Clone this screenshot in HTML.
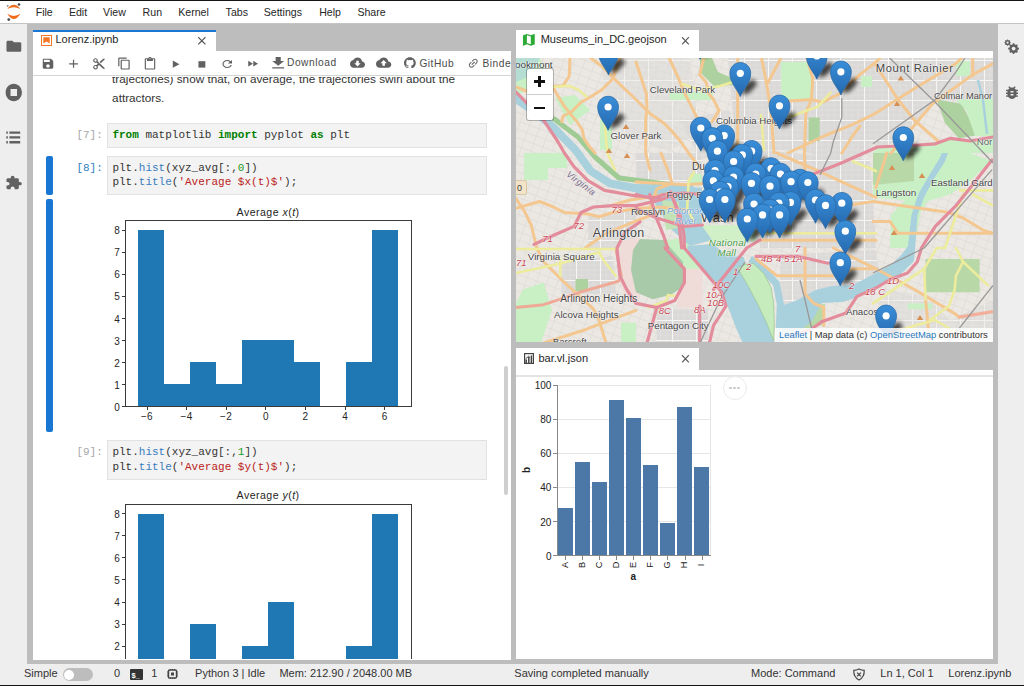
<!DOCTYPE html>
<html><head><meta charset="utf-8">
<style>
*{box-sizing:border-box;margin:0;padding:0}
html,body{width:1024px;height:686px;overflow:hidden;background:#bdbdbd;font-family:"Liberation Sans",sans-serif;color:rgba(0,0,0,0.87);position:relative}
.a{position:absolute}
.t{position:absolute;white-space:nowrap;line-height:1}
</style></head>
<body>
<div class="a" style="left:0px;top:0px;width:1024px;height:1px;background:#141414;"></div>
<div class="a" style="left:0px;top:685px;width:1024px;height:1px;background:#141414;"></div>
<div class="a" style="left:0px;top:1px;width:1024px;height:23px;background:#fff;border-bottom:1px solid #c4c4c4"></div>
<svg class="a" style="left:5px;top:2px" width="18" height="20" viewBox="0 0 18 20">
<path d="M2.3 6.9 Q8.85 -1.5 15.4 6.9 Q8.85 3.4 2.3 6.9Z" fill="#ef6c1a"/>
<path d="M2.3 11.8 Q8.85 22.2 15.4 11.8 Q8.85 16.0 2.3 11.8Z" fill="#ef6c1a"/>
<circle cx="14" cy="2.5" r="1.3" fill="#4a4a4a"/>
<circle cx="3.8" cy="17.6" r="1.4" fill="#4a4a4a"/>
<circle cx="2.7" cy="3.8" r="0.9" fill="#777"/>
</svg>
<div class="t " style="left:35.70px;top:6.93px;font-size:10.6px;color:#262626;font-family:'Liberation Sans',sans-serif;">File</div>
<div class="t " style="left:68.90px;top:6.93px;font-size:10.6px;color:#262626;font-family:'Liberation Sans',sans-serif;">Edit</div>
<div class="t " style="left:103.10px;top:6.93px;font-size:10.6px;color:#262626;font-family:'Liberation Sans',sans-serif;">View</div>
<div class="t " style="left:142.60px;top:6.93px;font-size:10.6px;color:#262626;font-family:'Liberation Sans',sans-serif;">Run</div>
<div class="t " style="left:178.20px;top:6.93px;font-size:10.6px;color:#262626;font-family:'Liberation Sans',sans-serif;">Kernel</div>
<div class="t " style="left:225.60px;top:6.93px;font-size:10.6px;color:#262626;font-family:'Liberation Sans',sans-serif;">Tabs</div>
<div class="t " style="left:263.70px;top:6.93px;font-size:10.6px;color:#262626;font-family:'Liberation Sans',sans-serif;">Settings</div>
<div class="t " style="left:319.20px;top:6.93px;font-size:10.6px;color:#262626;font-family:'Liberation Sans',sans-serif;">Help</div>
<div class="t " style="left:357.40px;top:6.93px;font-size:10.6px;color:#262626;font-family:'Liberation Sans',sans-serif;">Share</div>
<div class="a" style="left:0px;top:24px;width:27px;height:640px;background:#eeeeee;"></div>
<div class="a" style="left:998px;top:24px;width:26px;height:640px;background:#eeeeee;"></div>
<svg class="a" style="left:4.72px;top:38.25px" width="17.76" height="16.50" viewBox="0 0 24 24" preserveAspectRatio="none"><path d="M10 4H4c-1.1 0-1.99.9-1.99 2L2 18c0 1.1.9 2 2 2h16c1.1 0 2-.9 2-2V8c0-1.1-.9-2-2-2h-8l-2-2z" fill="#616161" /></svg>
<svg class="a" style="left:3.87px;top:81.56px" width="19.56" height="20.88" viewBox="0 0 24 24" preserveAspectRatio="none"><path d="M12 2C6.48 2 2 6.48 2 12s4.48 10 10 10 10-4.48 10-10S17.52 2 12 2zm4 14H8V8h8v8z" fill="#616161" /></svg>
<svg class="a" style="left:4.38px;top:122.60px" width="18.53" height="28.80" viewBox="0 0 24 24" preserveAspectRatio="none"><path d="M3 13h2v-2H3v2zm0 4h2v-2H3v2zm0-8h2V7H3v2zm4 4h14v-2H7v2zm0 4h14v-2H7v2zM7 7v2h14V7H7z" fill="#616161" /></svg>
<svg class="a" style="left:4.74px;top:175.36px" width="17.49" height="15.43" viewBox="0 0 24 24" preserveAspectRatio="none"><path d="M20.5 11H19V7c0-1.1-.9-2-2-2h-4V3.5C13 2.12 11.88 1 10.5 1S8 2.12 8 3.5V5H4c-1.1 0-1.99.9-1.99 2v3.8H3.5c1.49 0 2.7 1.21 2.7 2.7s-1.21 2.7-2.7 2.7H2V20c0 1.1.9 2 2 2h3.8v-1.5c0-1.49 1.21-2.7 2.7-2.7 1.490 0 2.7 1.21 2.7 2.7V22H17c1.1 0 2-.9 2-2v-4h1.5c1.38 0 2.5-1.12 2.5-2.5S21.88 11 20.5 11z" fill="#616161" /></svg>
<svg class="a" style="left:1004px;top:39px" width="16" height="16" viewBox="0 0 16 16">
<g fill="#616161">
<circle cx="3.6" cy="3.6" r="2.6"/>
<circle cx="9.6" cy="9.6" r="4.4"/>
</g>
<circle cx="3.6" cy="3.6" r="1.1" fill="#eee"/>
<circle cx="9.6" cy="9.6" r="1.9" fill="#eee"/>
<g stroke="#616161" stroke-width="1.6">
<path d="M9.6 4.2V15M4.2 9.6H15M5.8 5.8L13.4 13.4M13.4 5.8L5.8 13.4"/>
</g>
<circle cx="9.6" cy="9.6" r="1.9" fill="#eee"/>
<g stroke="#616161" stroke-width="1"><path d="M3.6 0.5V6.7M0.5 3.6H6.7M1.4 1.4L5.8 5.8M5.8 1.4L1.4 5.8"/></g>
<circle cx="3.6" cy="3.6" r="1.1" fill="#eee"/>
</svg>
<svg class="a" style="left:1003.00px;top:83.57px" width="18.00" height="17.07" viewBox="0 0 24 24" preserveAspectRatio="none"><path d="M20 8h-2.81c-.45-.78-1.07-1.45-1.82-1.96L17 4.41 15.59 3l-2.17 2.17C12.96 5.06 12.49 5 12 5c-.49 0-.96.06-1.41.17L8.41 3 7 4.41l1.62 1.63C7.88 6.55 7.26 7.22 6.81 8H4v2h2.09c-.05.33-.09.66-.09 1v1H4v2h2v1c0 .34.04.67.09 1H4v2h2.81c1.04 1.79 2.97 3 5.19 3s4.15-1.21 5.19-3H20v-2h-2.09c.05-.33.09-.66.09-1v-1h2v-2h-2v-1c0-.34-.04-.67-.09-1H20V8zm-6 8h-4v-2h4v2zm0-4h-4v-2h4v2z" fill="#616161" /></svg>
<div class="a" style="left:0px;top:664px;width:1024px;height:21px;background:#eeeeee;"></div>
<div class="t " style="left:24.00px;top:668.29px;font-size:11px;color:#333;font-family:'Liberation Sans',sans-serif;">Simple</div>
<div class="a" style="left:62.5px;top:668px;width:30px;height:13px;border-radius:7px;background:#bdbdbd"></div>
<div class="a" style="left:64px;top:669.5px;width:10px;height:10px;border-radius:5px;background:#fff"></div>
<div class="t " style="left:114.00px;top:668.29px;font-size:11px;color:#333;font-family:'Liberation Sans',sans-serif;">0</div>
<div class="a" style="left:129.7px;top:668.8px;width:13.3px;height:11.7px;background:#333;border-radius:1px"></div>
<div class="t " style="left:131.50px;top:671.85px;font-size:7.5px;color:#fff;font-family:'Liberation Sans',sans-serif;font-weight:bold">$_</div>
<div class="t " style="left:151.20px;top:668.29px;font-size:11px;color:#333;font-family:'Liberation Sans',sans-serif;">1</div>
<svg class="a" style="left:166px;top:669px" width="13" height="10" viewBox="0 0 13 10">
<rect x="2.5" y="1" width="8" height="8" rx="1" fill="none" stroke="#444" stroke-width="1.4"/>
<rect x="5" y="3.5" width="3" height="3" fill="#444"/>
<path d="M1 3h1.5M1 5h1.5M1 7h1.5M10.5 3H12M10.5 5H12M10.5 7H12M4.5 0V1M6.5 0V1M8.5 0V1M4.5 9V10M6.5 9V10M8.5 9V10" stroke="#444" stroke-width="0.9"/>
</svg>
<div class="t " style="left:195.10px;top:668.29px;font-size:11px;color:#333;font-family:'Liberation Sans',sans-serif;">Python 3 | Idle</div>
<div class="t " style="left:279.40px;top:668.29px;font-size:11px;color:#333;font-family:'Liberation Sans',sans-serif;">Mem: 212.90 / 2048.00 MB</div>
<div class="t " style="left:514.30px;top:668.29px;font-size:11px;color:#333;font-family:'Liberation Sans',sans-serif;">Saving completed manually</div>
<div class="t " style="left:751.00px;top:668.29px;font-size:11px;color:#333;font-family:'Liberation Sans',sans-serif;">Mode: Command</div>
<svg class="a" style="left:852px;top:668px" width="14" height="13" viewBox="0 0 14 13">
<path d="M7 1.0 Q9.5 2.2 12.2 2.4 Q12.6 9.2 7 12.0 Q1.4 9.2 1.8 2.4 Q4.5 2.2 7 1.0Z" fill="none" stroke="#444" stroke-width="1.2"/>
<path d="M5.1 4.6L8.9 8.4M8.9 4.6L5.1 8.4" stroke="#444" stroke-width="1.2"/>
</svg>
<div class="t " style="left:880.30px;top:668.29px;font-size:11px;color:#333;font-family:'Liberation Sans',sans-serif;">Ln 1, Col 1</div>
<div class="t " style="left:948.30px;top:668.29px;font-size:11px;color:#333;font-family:'Liberation Sans',sans-serif;">Lorenz.ipynb</div>
<div class="a" style="left:33px;top:51px;width:478px;height:609px;background:#fff;"></div>
<div class="a" style="left:33px;top:30px;width:183px;height:21px;background:#fff;border-top:2px solid #1976d2"></div>
<svg class="a" style="left:41px;top:35px" width="11" height="11" viewBox="0 0 11 11">
<rect x="0.5" y="0.5" width="10" height="10" fill="none" stroke="#f37726" stroke-width="1"/>
<path d="M2.3 2.2H8.7V8.6L5.5 6.6L2.3 8.6Z" fill="#f37726"/>
</svg>
<div class="t " style="left:55.50px;top:34.49px;font-size:11px;color:#262626;font-family:'Liberation Sans',sans-serif;">Lorenz.ipynb</div>
<svg class="a" style="left:195.14px;top:34.14px" width="13.71" height="13.71" viewBox="0 0 24 24" preserveAspectRatio="none"><path d="M19 6.41L17.59 5 12 10.59 6.41 5 5 6.41 10.59 12 5 17.59 6.41 19 12 13.41 17.59 19 19 17.59 13.41 12z" fill="#555" /></svg>
<div class="a" style="left:33px;top:75px;width:478px;height:1px;background:#d4d4d4;"></div>
<svg class="a" style="left:40.85px;top:57.13px" width="14.00" height="13.33" viewBox="0 0 24 24" preserveAspectRatio="none"><path d="M17 3H5c-1.11 0-2 .9-2 2v14c0 1.1.89 2 2 2h14c1.1 0 2-.9 2-2V7l-4-4zm-5 16c-1.66 0-3-1.34-3-3s1.34-3 3-3 3 1.34 3 3-1.34 3-3 3zm3-10H5V5h10v4z" fill="#616161" /></svg>
<svg class="a" style="left:65.86px;top:56.94px" width="15.09" height="13.71" viewBox="0 0 24 24" preserveAspectRatio="none"><path d="M19 13h-6v6h-2v-6H5v-2h6V5h2v6h6v2z" fill="#616161" /></svg>
<svg class="a" style="left:91.93px;top:57.17px" width="14.04" height="13.56" viewBox="0 0 24 24" preserveAspectRatio="none"><path d="M9.64 7.64c.23-.5.36-1.05.36-1.64 0-2.210-1.79-4-4-4S2 3.79 2 6s1.79 4 4 4c.59 0 1.14-.13 1.64-.36L10 12l-2.36 2.36C7.14 14.13 6.59 14 6 14c-2.21 0-4 1.79-4 4s1.79 4 4 4 4-1.79 4-4c0-.59-.13-1.14-.36-1.64L12 14l7 7h3v-1L9.64 7.64zM6 8c-1.1 0-2-.89-2-2s.9-2 2-2 2 .89 2 2-.9 2-2 2zm0 12c-1.1 0-2-.89-2-2s.9-2 2-2 2 .89 2 2-.9 2-2 2zm6-7.5c-.28 0-.5-.22-.5-.5s.22-.5.5-.5.5.22.5.5-.22.5-.5.5zM19 3l-6 6 2 2 7-7V3z" fill="#616161" /></svg>
<svg class="a" style="left:117.29px;top:57.45px" width="14.53" height="13.09" viewBox="0 0 24 24" preserveAspectRatio="none"><path d="M16 1H4c-1.1 0-2 .9-2 2v14h2V3h12V1zm3 4H8c-1.1 0-2 .9-2 2v14c0 1.1.9 2 2 2h11c1.1 0 2-.9 2-2V7c0-1.1-.9-2-2-2zm0 16H8V7h11v14z" fill="#616161" /></svg>
<svg class="a" style="left:143.15px;top:57.20px" width="14.00" height="13.75" viewBox="0 0 24 24" preserveAspectRatio="none"><path d="M19 2h-4.18C14.4.84 13.3 0 12 0c-1.3 0-2.4.84-2.82 2H5c-1.1 0-2 .9-2 2v16c0 1.1.9 2 2 2h14c1.1 0 2-.9 2-2V4c0-1.1-.9-2-2-2zm-7 0c.55 0 1 .45 1 1s-.45 1-1 1-1-.45-1-1 .45-1 1-1zm7 18H5V4h2v3h10V4h2v16z" fill="#616161" /></svg>
<svg class="a" style="left:168.40px;top:57.93px" width="14.40" height="12.34" viewBox="0 0 24 24" preserveAspectRatio="none"><path d="M8 5v14l11-7z" fill="#616161" /></svg>
<svg class="a" style="left:194.75px;top:57.70px" width="13.80" height="12.80" viewBox="0 0 24 24" preserveAspectRatio="none"><path d="M6 6h12v12H6z" fill="#616161" /></svg>
<svg class="a" style="left:219.80px;top:58.00px" width="14.40" height="12.00" viewBox="0 0 24 24" preserveAspectRatio="none"><path d="M17.65 6.35C16.2 4.9 14.21 4 12 4c-4.42 0-7.99 3.580-7.99 8s3.57 8 7.99 8c3.73 0 6.84-2.55 7.730-6h-2.08c-.82 2.33-3.04 4-5.65 4-3.31 0-6-2.69-6-6s2.69-6 6-6c1.66 0 3.14.69 4.22 1.78L13 11h7V4l-2.35 2.35z" fill="#616161" /></svg>
<svg class="a" style="left:245.66px;top:58.45px" width="13.44" height="11.40" viewBox="0 0 24 24" preserveAspectRatio="none"><path d="M4 18l8.5-6L4 6v12zm9-12v12l8.5-6L13 6z" fill="#616161" /></svg>
<svg class="a" style="left:267.85px;top:54.97px" width="20.40" height="16.24" viewBox="0 0 24 24" preserveAspectRatio="none"><path d="M19 9h-4V3H9v6H5l7 7 7-7zM5 18v2h14v-2H5z" fill="#616161" /></svg>
<div class="t " style="left:287.00px;top:58.37px;font-size:10.2px;color:#4a4a4a;font-family:'Liberation Sans',sans-serif;letter-spacing:0.55px">Download</div>
<svg class="a" style="left:349.80px;top:55.15px" width="15.00" height="15.30" viewBox="0 0 24 24" preserveAspectRatio="none"><path d="M19.35 10.04C18.67 6.59 15.64 4 12 4 9.11 4 6.6 5.64 5.35 8.04 2.34 8.36 0 10.91 0 14c0 3.31 2.69 6 6 6h13c2.76 0 5-2.24 5-5 0-2.64-2.05-4.78-4.65-4.96zM17 13l-5 5-5-5h3V9h4v4h3z" fill="#616161" /></svg>
<svg class="a" style="left:376.40px;top:55.15px" width="15.30" height="15.30" viewBox="0 0 24 24" preserveAspectRatio="none"><path d="M19.35 10.04C18.67 6.59 15.64 4 12 4 9.11 4 6.6 5.64 5.35 8.04 2.34 8.360 0 10.91 0 14c0 3.31 2.69 6 6 6h13c2.76 0 5-2.24 5-5 0-2.64-2.05-4.78-4.65-4.96zM14 13v4h-4v-4H7l5-5 5 5h-3z" fill="#616161" /></svg>
<svg class="a" style="left:404.40px;top:56.65px" width="11.80" height="11.79" viewBox="0 0 24 24" preserveAspectRatio="none"><path d="M12 .5C5.37.5 0 5.78 0 12.29c0 5.21 3.44 9.63 8.21 11.19.6.11.82-.26.82-.57v-2c-3.34.72-4.04-1.59-4.04-1.59-.55-1.37-1.33-1.74-1.33-1.74-1.09-.73.08-.72.08-.72 1.2.08 1.84 1.22 1.84 1.22 1.07 1.800 2.81 1.28 3.49.98.11-.76.42-1.28.76-1.57-2.67-.3-5.47-1.310-5.47-5.83 0-1.29.47-2.34 1.24-3.160-.12-.3-.54-1.5.12-3.12 0 0 1.01-.32 3.3 1.21a11.5 11.5 0 0 1 6 0c2.29-1.53 3.3-1.21 3.3-1.21.66 1.62.24 2.82.12 3.12.77.82 1.24 1.87 1.24 3.16 0 4.53-2.81 5.53-5.48 5.820.43.37.82 1.1.82 2.22v3.29c0 .32.22.69.83.57C20.57 21.91 24 17.5 24 12.29 24 5.78 18.63.5 12 .5z" fill="#616161" /></svg>
<div class="a" style="left:419px;top:52px;width:92px;height:20px;overflow:hidden">
<div class="t " style="left:0.40px;top:6.57px;font-size:10.2px;color:#4a4a4a;font-family:'Liberation Sans',sans-serif;letter-spacing:0.5px">GitHub</div>
<svg class="a" style="left:48px;top:5px" width="12.5" height="12.5" viewBox="0 0 24 24"><g transform="rotate(-45 12 12)"><path d="M3.9 12c0-1.71 1.39-3.1 3.1-3.1h4V7H7c-2.76 0-5 2.24-5 5s2.24 5 5 5h4v-1.9H7c-1.71 0-3.1-1.39-3.1-3.1zM8 13h8v-2H8v2zm9-6h-4v1.9h4c1.71 0 3.1 1.39 3.1 3.1s-1.39 3.1-3.1 3.1h-4V17h4c2.76 0 5-2.24 5-5s-2.24-5-5-5z" fill="#616161"/></g></svg>
<div class="t " style="left:63.50px;top:6.57px;font-size:10.2px;color:#4a4a4a;font-family:'Liberation Sans',sans-serif;letter-spacing:0.5px">Binder</div>
</div>
<div class="a" style="left:516px;top:51px;width:477px;height:7px;background:#fff;"></div>
<div class="a" style="left:516px;top:30px;width:183px;height:21px;background:#fff;"></div>
<svg class="a" style="left:521.23px;top:32.05px" width="15.73" height="15.60" viewBox="0 0 24 24" preserveAspectRatio="none"><path d="M20.5 3l-.16.03L15 5.1 9 3 3.36 4.9c-.21.07-.36.25-.36.48V20.5c0 .28.22.5.5.5l.16-.03L9 18.9l6 2.1 5.64-1.9c.21-.07.36-.25.36-.48V3.5c0-.28-.22-.5-.5-.5zM15 19l-6-2.11V5l6 2.11V19z" fill="#2da936" /></svg>
<div class="t " style="left:540.70px;top:34.29px;font-size:11px;color:#262626;font-family:'Liberation Sans',sans-serif;">Museums_in_DC.geojson</div>
<svg class="a" style="left:678.72px;top:34.14px" width="12.86" height="13.71" viewBox="0 0 24 24" preserveAspectRatio="none"><path d="M19 6.41L17.59 5 12 10.59 6.41 5 5 6.41 10.59 12 5 17.59 6.41 19 12 13.41 17.59 19 19 17.59 13.41 12z" fill="#555" /></svg>
<div class="a" style="left:516px;top:370px;width:477px;height:289px;background:#fff;"></div>
<div class="a" style="left:516px;top:348px;width:183px;height:22px;background:#fff;"></div>
<div class="a" style="left:516px;top:375px;width:477px;height:2px;background:#e4e4e4;"></div>
<svg class="a" style="left:524px;top:353px" width="10" height="11" viewBox="0 0 10 11">
<rect x="0.6" y="0.6" width="8.8" height="9.8" fill="none" stroke="#444" stroke-width="1.2"/>
<path d="M2.2 10V6.5M4.8 10V4M7.4 10V2.5" stroke="#444" stroke-width="1.5"/>
<path d="M1.5 6L4.5 3.2L6 4.5" stroke="#444" stroke-width="1" fill="none"/>
</svg>
<div class="t " style="left:538.50px;top:353.19px;font-size:11px;color:#262626;font-family:'Liberation Sans',sans-serif;">bar.vl.json</div>
<svg class="a" style="left:678.72px;top:352.14px" width="12.86" height="13.71" viewBox="0 0 24 24" preserveAspectRatio="none"><path d="M19 6.41L17.59 5 12 10.59 6.41 5 5 6.41 10.59 12 5 17.59 6.41 19 12 13.41 17.59 19 19 17.59 13.41 12z" fill="#555" /></svg>
<div class="a" style="left:33px;top:76.6px;width:478px;height:582.9px;overflow:hidden">
<div class="t " style="left:79.10px;top:-3.95px;font-size:11.75px;color:#333;font-family:'Liberation Sans',sans-serif;">trajectories) show that, on average, the trajectories swirl about the</div>
<div class="t " style="left:79.10px;top:15.75px;font-size:11.75px;color:#333;font-family:'Liberation Sans',sans-serif;">attractors.</div>
<div class="a" style="left:74.30px;top:46.50px;width:380.00px;height:24.60px;background:#f3f3f3;border:1px solid #e2e2e2"></div>
<div class="t " style="left:43.40px;top:53.37px;font-size:11px;color:#a8a8a8;font-family:'Liberation Mono',monospace;">[7]:</div>
<div class="t " style="left:79.40px;top:53.17px;font-size:11px;color:#333;font-family:'Liberation Mono',monospace;"><span style="color:#008000;font-weight:bold">from</span> matplotlib <span style="color:#008000;font-weight:bold">import</span> pyplot <span style="color:#008000;font-weight:bold">as</span> plt</div>
<div class="a" style="left:13.00px;top:79.40px;width:7.00px;height:39.00px;background:#1976d2;border-radius:2px"></div>
<div class="a" style="left:74.30px;top:79.60px;width:380.00px;height:38.80px;background:#f3f3f3;border:1px solid #e2e2e2"></div>
<div class="t " style="left:43.40px;top:86.57px;font-size:11px;color:#307fc1;font-family:'Liberation Mono',monospace;">[8]:</div>
<div class="t " style="left:79.40px;top:86.47px;font-size:11px;color:#333;font-family:'Liberation Mono',monospace;">plt.<span style="color:#3a7dc0">hist</span>(xyz_avg[:,<span style="color:#1a9a1a">0</span>])</div>
<div class="t " style="left:79.40px;top:100.77px;font-size:11px;color:#333;font-family:'Liberation Mono',monospace;">plt.<span style="color:#3a7dc0">title</span>(<span style="color:#ba2121">'Average $x(t)$'</span>);</div>
<div class="a" style="left:13.00px;top:122.40px;width:7.00px;height:232.70px;background:#1976d2;border-radius:2px"></div>
<div class="a" style="left:74.30px;top:363.70px;width:380.00px;height:39.80px;background:#f3f3f3;border:1px solid #e2e2e2"></div>
<div class="t " style="left:43.40px;top:370.77px;font-size:11px;color:#a8a8a8;font-family:'Liberation Mono',monospace;">[9]:</div>
<div class="t " style="left:79.40px;top:370.67px;font-size:11px;color:#333;font-family:'Liberation Mono',monospace;">plt.<span style="color:#3a7dc0">hist</span>(xyz_avg[:,<span style="color:#1a9a1a">1</span>])</div>
<div class="t " style="left:79.40px;top:384.97px;font-size:11px;color:#333;font-family:'Liberation Mono',monospace;">plt.<span style="color:#3a7dc0">title</span>(<span style="color:#ba2121">'Average $y(t)$'</span>);</div>
<div class="a" style="left:105.20px;top:153.40px;width:26.23px;height:176.40px;background:#1f77b4;"></div>
<div class="a" style="left:131.13px;top:307.75px;width:26.23px;height:22.05px;background:#1f77b4;"></div>
<div class="a" style="left:157.06px;top:285.70px;width:26.23px;height:44.10px;background:#1f77b4;"></div>
<div class="a" style="left:182.99px;top:307.75px;width:26.23px;height:22.05px;background:#1f77b4;"></div>
<div class="a" style="left:208.92px;top:263.65px;width:26.23px;height:66.15px;background:#1f77b4;"></div>
<div class="a" style="left:234.85px;top:263.65px;width:26.23px;height:66.15px;background:#1f77b4;"></div>
<div class="a" style="left:260.78px;top:285.70px;width:26.23px;height:44.10px;background:#1f77b4;"></div>
<div class="a" style="left:312.64px;top:285.70px;width:26.23px;height:44.10px;background:#1f77b4;"></div>
<div class="a" style="left:338.57px;top:153.40px;width:26.23px;height:176.40px;background:#1f77b4;"></div>
<div class="a" style="left:92.20px;top:143.40px;width:1.00px;height:186.90px;background:#3a3a3a;"></div>
<div class="a" style="left:377.70px;top:143.40px;width:1.00px;height:186.90px;background:#3a3a3a;"></div>
<div class="a" style="left:92.20px;top:143.40px;width:286.50px;height:1.00px;background:#3a3a3a;"></div>
<div class="a" style="left:92.20px;top:329.30px;width:286.50px;height:1.00px;background:#3a3a3a;"></div>
<div class="a" style="left:89.30px;top:329.35px;width:3.40px;height:0.90px;background:#3a3a3a;"></div>
<div class="t " style="left:81.20px;top:326.14px;font-size:10px;color:#262626;font-family:'Liberation Sans',sans-serif;">0</div>
<div class="a" style="left:89.30px;top:307.30px;width:3.40px;height:0.90px;background:#3a3a3a;"></div>
<div class="t " style="left:81.20px;top:304.08px;font-size:10px;color:#262626;font-family:'Liberation Sans',sans-serif;">1</div>
<div class="a" style="left:89.30px;top:285.25px;width:3.40px;height:0.90px;background:#3a3a3a;"></div>
<div class="t " style="left:81.20px;top:282.04px;font-size:10px;color:#262626;font-family:'Liberation Sans',sans-serif;">2</div>
<div class="a" style="left:89.30px;top:263.20px;width:3.40px;height:0.90px;background:#3a3a3a;"></div>
<div class="t " style="left:81.20px;top:259.99px;font-size:10px;color:#262626;font-family:'Liberation Sans',sans-serif;">3</div>
<div class="a" style="left:89.30px;top:241.15px;width:3.40px;height:0.90px;background:#3a3a3a;"></div>
<div class="t " style="left:81.20px;top:237.94px;font-size:10px;color:#262626;font-family:'Liberation Sans',sans-serif;">4</div>
<div class="a" style="left:89.30px;top:219.10px;width:3.40px;height:0.90px;background:#3a3a3a;"></div>
<div class="t " style="left:81.20px;top:215.88px;font-size:10px;color:#262626;font-family:'Liberation Sans',sans-serif;">5</div>
<div class="a" style="left:89.30px;top:197.05px;width:3.40px;height:0.90px;background:#3a3a3a;"></div>
<div class="t " style="left:81.20px;top:193.83px;font-size:10px;color:#262626;font-family:'Liberation Sans',sans-serif;">6</div>
<div class="a" style="left:89.30px;top:175.00px;width:3.40px;height:0.90px;background:#3a3a3a;"></div>
<div class="t " style="left:81.20px;top:171.78px;font-size:10px;color:#262626;font-family:'Liberation Sans',sans-serif;">7</div>
<div class="a" style="left:89.30px;top:152.95px;width:3.40px;height:0.90px;background:#3a3a3a;"></div>
<div class="t " style="left:81.20px;top:149.73px;font-size:10px;color:#262626;font-family:'Liberation Sans',sans-serif;">8</div>
<div class="a" style="left:113.55px;top:329.80px;width:0.90px;height:3.40px;background:#3a3a3a;"></div>
<div class="t " style="left:107.90px;top:335.83px;font-size:10px;color:#262626;font-family:'Liberation Sans',sans-serif;letter-spacing:0.3px">&minus;6</div>
<div class="a" style="left:153.15px;top:329.80px;width:0.90px;height:3.40px;background:#3a3a3a;"></div>
<div class="t " style="left:147.50px;top:335.83px;font-size:10px;color:#262626;font-family:'Liberation Sans',sans-serif;letter-spacing:0.3px">&minus;4</div>
<div class="a" style="left:192.75px;top:329.80px;width:0.90px;height:3.40px;background:#3a3a3a;"></div>
<div class="t " style="left:187.10px;top:335.83px;font-size:10px;color:#262626;font-family:'Liberation Sans',sans-serif;letter-spacing:0.3px">&minus;2</div>
<div class="a" style="left:232.35px;top:329.80px;width:0.90px;height:3.40px;background:#3a3a3a;"></div>
<div class="t " style="left:230.00px;top:335.83px;font-size:10px;color:#262626;font-family:'Liberation Sans',sans-serif;">0</div>
<div class="a" style="left:271.95px;top:329.80px;width:0.90px;height:3.40px;background:#3a3a3a;"></div>
<div class="t " style="left:269.60px;top:335.83px;font-size:10px;color:#262626;font-family:'Liberation Sans',sans-serif;">2</div>
<div class="a" style="left:311.55px;top:329.80px;width:0.90px;height:3.40px;background:#3a3a3a;"></div>
<div class="t " style="left:309.20px;top:335.83px;font-size:10px;color:#262626;font-family:'Liberation Sans',sans-serif;">4</div>
<div class="a" style="left:351.15px;top:329.80px;width:0.90px;height:3.40px;background:#3a3a3a;"></div>
<div class="t " style="left:348.80px;top:335.83px;font-size:10px;color:#262626;font-family:'Liberation Sans',sans-serif;">6</div>
<div class="t " style="left:203.60px;top:130.03px;font-size:10.6px;color:#262626;font-family:'Liberation Sans',sans-serif;letter-spacing:0.45px">Average <i>x</i>(<i>t</i>)</div>
<div class="a" style="left:105.20px;top:437.20px;width:26.23px;height:176.40px;background:#1f77b4;"></div>
<div class="a" style="left:131.13px;top:591.55px;width:26.23px;height:22.05px;background:#1f77b4;"></div>
<div class="a" style="left:157.06px;top:547.45px;width:26.23px;height:66.15px;background:#1f77b4;"></div>
<div class="a" style="left:182.99px;top:591.55px;width:26.23px;height:22.05px;background:#1f77b4;"></div>
<div class="a" style="left:208.92px;top:569.50px;width:26.23px;height:44.10px;background:#1f77b4;"></div>
<div class="a" style="left:234.85px;top:525.40px;width:26.23px;height:88.20px;background:#1f77b4;"></div>
<div class="a" style="left:260.78px;top:591.55px;width:26.23px;height:22.05px;background:#1f77b4;"></div>
<div class="a" style="left:286.71px;top:591.55px;width:26.23px;height:22.05px;background:#1f77b4;"></div>
<div class="a" style="left:312.64px;top:569.50px;width:26.23px;height:44.10px;background:#1f77b4;"></div>
<div class="a" style="left:338.57px;top:437.20px;width:26.23px;height:176.40px;background:#1f77b4;"></div>
<div class="a" style="left:92.20px;top:427.10px;width:1.00px;height:187.00px;background:#3a3a3a;"></div>
<div class="a" style="left:377.70px;top:427.10px;width:1.00px;height:187.00px;background:#3a3a3a;"></div>
<div class="a" style="left:92.20px;top:427.10px;width:286.50px;height:1.00px;background:#3a3a3a;"></div>
<div class="a" style="left:92.20px;top:613.10px;width:286.50px;height:1.00px;background:#3a3a3a;"></div>
<div class="a" style="left:89.30px;top:569.05px;width:3.40px;height:0.90px;background:#3a3a3a;"></div>
<div class="t " style="left:81.20px;top:565.83px;font-size:10px;color:#262626;font-family:'Liberation Sans',sans-serif;">2</div>
<div class="a" style="left:89.30px;top:547.00px;width:3.40px;height:0.90px;background:#3a3a3a;"></div>
<div class="t " style="left:81.20px;top:543.78px;font-size:10px;color:#262626;font-family:'Liberation Sans',sans-serif;">3</div>
<div class="a" style="left:89.30px;top:524.95px;width:3.40px;height:0.90px;background:#3a3a3a;"></div>
<div class="t " style="left:81.20px;top:521.73px;font-size:10px;color:#262626;font-family:'Liberation Sans',sans-serif;">4</div>
<div class="a" style="left:89.30px;top:502.90px;width:3.40px;height:0.90px;background:#3a3a3a;"></div>
<div class="t " style="left:81.20px;top:499.69px;font-size:10px;color:#262626;font-family:'Liberation Sans',sans-serif;">5</div>
<div class="a" style="left:89.30px;top:480.85px;width:3.40px;height:0.90px;background:#3a3a3a;"></div>
<div class="t " style="left:81.20px;top:477.64px;font-size:10px;color:#262626;font-family:'Liberation Sans',sans-serif;">6</div>
<div class="a" style="left:89.30px;top:458.80px;width:3.40px;height:0.90px;background:#3a3a3a;"></div>
<div class="t " style="left:81.20px;top:455.58px;font-size:10px;color:#262626;font-family:'Liberation Sans',sans-serif;">7</div>
<div class="a" style="left:89.30px;top:436.75px;width:3.40px;height:0.90px;background:#3a3a3a;"></div>
<div class="t " style="left:81.20px;top:433.54px;font-size:10px;color:#262626;font-family:'Liberation Sans',sans-serif;">8</div>
<div class="t " style="left:203.60px;top:413.73px;font-size:10.6px;color:#262626;font-family:'Liberation Sans',sans-serif;letter-spacing:0.45px">Average <i>y</i>(<i>t</i>)</div>
<div class="a" style="left:470.50px;top:289.40px;width:4.50px;height:129.00px;background:#cfcfcf;border-radius:2px"></div>
</div>
<div class="a" style="left:557.1px;top:555.1px;width:153.5px;height:1px;background:#e6e6e6;"></div>
<div class="a" style="left:552.6px;top:555.1px;width:4.5px;height:1px;background:#888;"></div>
<div class="t " style="left:545.90px;top:551.63px;font-size:10px;color:#222;font-family:'Liberation Sans',sans-serif;">0</div>
<div class="a" style="left:557.1px;top:521.0px;width:153.5px;height:1px;background:#e6e6e6;"></div>
<div class="a" style="left:552.6px;top:521.0px;width:4.5px;height:1px;background:#888;"></div>
<div class="t " style="left:540.30px;top:517.53px;font-size:10px;color:#222;font-family:'Liberation Sans',sans-serif;">20</div>
<div class="a" style="left:557.1px;top:486.9px;width:153.5px;height:1px;background:#e6e6e6;"></div>
<div class="a" style="left:552.6px;top:486.9px;width:4.5px;height:1px;background:#888;"></div>
<div class="t " style="left:540.30px;top:483.44px;font-size:10px;color:#222;font-family:'Liberation Sans',sans-serif;">40</div>
<div class="a" style="left:557.1px;top:452.8px;width:153.5px;height:1px;background:#e6e6e6;"></div>
<div class="a" style="left:552.6px;top:452.8px;width:4.5px;height:1px;background:#888;"></div>
<div class="t " style="left:540.30px;top:449.34px;font-size:10px;color:#222;font-family:'Liberation Sans',sans-serif;">60</div>
<div class="a" style="left:557.1px;top:418.7px;width:153.5px;height:1px;background:#e6e6e6;"></div>
<div class="a" style="left:552.6px;top:418.7px;width:4.5px;height:1px;background:#888;"></div>
<div class="t " style="left:540.30px;top:415.24px;font-size:10px;color:#222;font-family:'Liberation Sans',sans-serif;">80</div>
<div class="a" style="left:557.1px;top:384.6px;width:153.5px;height:1px;background:#e6e6e6;"></div>
<div class="a" style="left:552.6px;top:384.6px;width:4.5px;height:1px;background:#888;"></div>
<div class="t " style="left:534.70px;top:381.14px;font-size:10px;color:#222;font-family:'Liberation Sans',sans-serif;">100</div>
<div class="a" style="left:710.1px;top:385.1px;width:1px;height:170.5px;background:#e6e6e6;"></div>
<div class="a" style="left:557.95px;top:507.86px;width:15.05px;height:47.74px;background:#4c78a8;"></div>
<div class="a" style="left:575.01px;top:461.83px;width:15.05px;height:93.78px;background:#4c78a8;"></div>
<div class="a" style="left:592.06px;top:482.29px;width:15.05px;height:73.31px;background:#4c78a8;"></div>
<div class="a" style="left:609.12px;top:400.45px;width:15.05px;height:155.16px;background:#4c78a8;"></div>
<div class="a" style="left:626.17px;top:417.5px;width:15.05px;height:138.11px;background:#4c78a8;"></div>
<div class="a" style="left:643.23px;top:465.24px;width:15.05px;height:90.37px;background:#4c78a8;"></div>
<div class="a" style="left:660.28px;top:523.21px;width:15.05px;height:32.4px;background:#4c78a8;"></div>
<div class="a" style="left:677.34px;top:407.26px;width:15.05px;height:148.34px;background:#4c78a8;"></div>
<div class="a" style="left:694.39px;top:466.94px;width:15.05px;height:88.66px;background:#4c78a8;"></div>
<div class="a" style="left:556.6px;top:385.1px;width:1px;height:171.0px;background:#888;"></div>
<div class="a" style="left:556.6px;top:555.1px;width:154.0px;height:1px;background:#888;"></div>
<div class="a" style="left:565.13px;top:555.6px;width:1px;height:4.5px;background:#888;"></div>
<div class="t" style="left:558.63px;top:559.20px;width:12px;height:12px;font-size:9.2px;color:#222;transform-origin:6px 6px;transform:rotate(-90deg);text-align:center;line-height:12px">A</div>
<div class="a" style="left:582.18px;top:555.6px;width:1px;height:4.5px;background:#888;"></div>
<div class="t" style="left:575.68px;top:559.20px;width:12px;height:12px;font-size:9.2px;color:#222;transform-origin:6px 6px;transform:rotate(-90deg);text-align:center;line-height:12px">B</div>
<div class="a" style="left:599.24px;top:555.6px;width:1px;height:4.5px;background:#888;"></div>
<div class="t" style="left:592.74px;top:559.20px;width:12px;height:12px;font-size:9.2px;color:#222;transform-origin:6px 6px;transform:rotate(-90deg);text-align:center;line-height:12px">C</div>
<div class="a" style="left:616.29px;top:555.6px;width:1px;height:4.5px;background:#888;"></div>
<div class="t" style="left:609.79px;top:559.20px;width:12px;height:12px;font-size:9.2px;color:#222;transform-origin:6px 6px;transform:rotate(-90deg);text-align:center;line-height:12px">D</div>
<div class="a" style="left:633.35px;top:555.6px;width:1px;height:4.5px;background:#888;"></div>
<div class="t" style="left:626.85px;top:559.20px;width:12px;height:12px;font-size:9.2px;color:#222;transform-origin:6px 6px;transform:rotate(-90deg);text-align:center;line-height:12px">E</div>
<div class="a" style="left:650.41px;top:555.6px;width:1px;height:4.5px;background:#888;"></div>
<div class="t" style="left:643.91px;top:559.20px;width:12px;height:12px;font-size:9.2px;color:#222;transform-origin:6px 6px;transform:rotate(-90deg);text-align:center;line-height:12px">F</div>
<div class="a" style="left:667.46px;top:555.6px;width:1px;height:4.5px;background:#888;"></div>
<div class="t" style="left:660.96px;top:559.20px;width:12px;height:12px;font-size:9.2px;color:#222;transform-origin:6px 6px;transform:rotate(-90deg);text-align:center;line-height:12px">G</div>
<div class="a" style="left:684.52px;top:555.6px;width:1px;height:4.5px;background:#888;"></div>
<div class="t" style="left:678.02px;top:559.20px;width:12px;height:12px;font-size:9.2px;color:#222;transform-origin:6px 6px;transform:rotate(-90deg);text-align:center;line-height:12px">H</div>
<div class="a" style="left:701.57px;top:555.6px;width:1px;height:4.5px;background:#888;"></div>
<div class="t" style="left:695.07px;top:559.20px;width:12px;height:12px;font-size:9.2px;color:#222;transform-origin:6px 6px;transform:rotate(-90deg);text-align:center;line-height:12px">I</div>
<div class="t " style="left:630.50px;top:572.03px;font-size:10px;color:#222;font-family:'Liberation Sans',sans-serif;font-weight:bold">a</div>
<div class="t" style="left:521px;top:464px;width:12px;height:12px;font-size:10px;color:#222;font-weight:bold;transform-origin:6px 6px;transform:rotate(-90deg);text-align:center;line-height:12px">b</div>
<div class="a" style="left:722.5px;top:376px;width:24px;height:24px;border-radius:12px;border:1px solid #eaeaea;background:#fff"></div>
<div class="a" style="left:729.30px;top:386.80px;width:2.4px;height:2.4px;border-radius:1.2px;background:#c8c8c8"></div>
<div class="a" style="left:733.30px;top:386.80px;width:2.4px;height:2.4px;border-radius:1.2px;background:#c8c8c8"></div>
<div class="a" style="left:737.30px;top:386.80px;width:2.4px;height:2.4px;border-radius:1.2px;background:#c8c8c8"></div>
<div class="a" style="left:516px;top:58px;width:477px;height:284px;overflow:hidden"><div class="a" style="left:-516px;top:-58px;width:1024px;height:686px">
<svg class="a" style="left:516px;top:58px" width="477" height="284" viewBox="516 58 477 284">
<defs>
<linearGradient id="pg" x1="0" y1="0" x2="0" y2="1"><stop offset="0" stop-color="#3a8fd9"/><stop offset="1" stop-color="#2468ae"/></linearGradient>
<filter id="bl" x="-50%" y="-50%" width="200%" height="200%"><feGaussianBlur stdDeviation="2.0"/></filter>
<pattern id="gr" width="24" height="20" patternUnits="userSpaceOnUse"><rect width="24" height="20" fill="#dad9d7"/><path d="M0 5H24M0 10H24M0 15H24M6 0V20M12 0V20M18 0V20" stroke="#e4e3e1" stroke-width="0.6"/><path d="M0 0.5H24M0.5 0V20" stroke="#f6f6f5" stroke-width="1.1"/></pattern>
<pattern id="sb" width="10" height="8" patternUnits="userSpaceOnUse" patternTransform="rotate(20)"><rect width="10" height="8" fill="#ebe8e3"/><path d="M0 0.4H10M0.4 0V8" stroke="#dcd9d4" stroke-width="0.7"/></pattern>
</defs>
<rect x="516" y="58" width="477" height="284" fill="url(#sb)"/>
<polygon points="636.0,153.0 702.0,153.0 702.0,182.0 636.0,182.0" fill="url(#gr)" opacity="1"/>
<polygon points="728.0,58.0 880.0,58.0 876.0,140.0 860.0,160.0 830.0,160.0 800.0,150.0 760.0,150.0 735.0,140.0" fill="url(#gr)" opacity="1"/>
<polygon points="870.0,58.0 993.0,58.0 993.0,98.0 960.0,100.0 935.0,100.0 900.0,140.0 875.0,150.0" fill="url(#gr)" opacity="0.95"/>
<polygon points="760.0,150.0 870.0,160.0 873.0,201.0 876.0,248.0 760.0,248.0" fill="url(#gr)" opacity="1"/>
<polygon points="561.7,262.0 613.0,256.0 616.0,293.7 561.7,293.7" fill="url(#gr)" opacity="1"/>
<polygon points="656.8,309.0 708.0,309.0 708.0,343.0 656.8,343.0" fill="url(#gr)" opacity="1"/>
<polygon points="780.0,255.0 876.0,250.0 880.0,275.0 840.0,290.0 800.0,300.0 780.0,330.0" fill="url(#gr)" opacity="0.9"/>
<polygon points="880.0,290.0 925.0,295.0 950.0,320.0 993.0,300.0 993.0,343.0 880.0,343.0" fill="url(#gr)" opacity="0.6"/>
<polygon points="873.0,58.0 873.0,153.0 836.0,165.0 836.0,58.0" fill="url(#gr)" opacity="0.5"/>
<polygon points="600.0,58.0 690.0,58.0 700.0,130.0 672.0,150.0 640.0,145.0 610.0,120.0" fill="url(#gr)" opacity="0.55"/>
<polygon points="680.0,120.0 730.0,110.0 735.0,150.0 700.0,160.0" fill="url(#gr)" opacity="0.8"/>
<polygon points="588.0,216.0 612.0,213.0 636.0,211.0 638.0,236.0 622.0,248.0 588.0,248.0" fill="url(#gr)" opacity="0.9"/>
<polygon points="873.0,153.0 970.0,153.0 991.0,161.0 970.0,181.0 950.0,194.5 928.0,201.0 921.0,211.0 914.0,248.0 890.0,248.0 891.0,215.0 905.0,200.0 873.0,198.0" fill="#c8f0c4"/>
<polygon points="877.0,147.0 920.0,145.0 950.0,139.0 970.0,141.0 993.0,137.0 993.0,153.0 873.0,153.0" fill="#c8f0c4"/>
<polygon points="873.0,153.0 914.0,153.0 914.0,181.0 873.0,185.0" fill="#b9d8a8"/>
<polygon points="936.7,99.5 961.6,103.7 970.0,120.3 975.4,135.5 958.8,138.3 945.0,123.0" fill="#aed1a0"/>
<polygon points="956.0,99.5 993.0,99.0 993.0,136.0 975.0,136.0 966.0,110.0" fill="#c8f0c4"/>
<polygon points="956.0,61.0 970.0,61.0 970.0,76.0 956.0,76.0" fill="#c8f0c4"/>
<polygon points="781.0,62.0 811.0,62.0 811.0,99.5 781.0,99.5" fill="#c8f0c4"/>
<polygon points="808.6,117.5 819.7,117.5 819.7,141.0 808.6,141.0" fill="#aed1a0"/>
<polygon points="861.0,76.0 872.0,76.0 872.0,87.0 861.0,87.0" fill="#c8f0c4"/>
<polygon points="700.0,58.0 712.0,58.0 718.0,72.0 732.0,78.0 735.0,85.0 714.0,86.0 700.0,72.0" fill="#aed1a0"/>
<polygon points="669.0,92.0 713.0,92.0 713.0,100.0 670.0,100.0" fill="#c8f0c4"/>
<polygon points="524.0,153.0 548.0,153.0 548.0,180.0 524.0,180.0" fill="#c8f0c4"/>
<polygon points="548.0,153.0 567.0,153.0 567.0,168.0 548.0,168.0" fill="#c8f0c4"/>
<polygon points="516.0,58.0 540.0,58.0 545.0,72.0 530.0,90.0 516.0,95.0" fill="#c8f0c4"/>
<polygon points="555.0,98.0 575.0,95.0 590.0,110.0 570.0,125.0" fill="#c8f0c4"/>
<polygon points="600.0,120.0 612.0,120.0 612.0,150.0 600.0,150.0" fill="#c8f0c4"/>
<polygon points="925.6,259.0 979.6,259.0 979.6,292.3 925.6,292.3" fill="#b9d8a8"/>
<polygon points="907.6,303.4 932.5,303.4 932.5,309.0 907.6,309.0" fill="#c8f0c4"/>
<polygon points="522.9,289.5 543.7,282.6 552.0,310.3 540.9,343.0 516.0,343.0 516.0,303.4" fill="#c8f0c4"/>
<polygon points="575.5,279.0 588.0,279.0 588.0,291.0 575.5,291.0" fill="#aed1a0"/>
<polygon points="621.0,322.7 636.0,322.7 636.0,343.0 621.0,343.0" fill="#c8f0c4"/>
<polygon points="702.0,225.0 756.0,225.0 756.0,241.6 702.0,241.6" fill="#d2f0c8"/>
<polygon points="690.0,173.8 702.0,173.8 702.0,183.4 690.0,183.4" fill="#c8f0c4"/>
<polygon points="800.0,306.0 825.0,304.0 822.0,325.0 800.0,330.0" fill="#b9d8a8"/>
<polygon points="660.0,240.0 690.0,238.0 700.0,270.0 690.0,300.0" fill="#c8f0c4"/>
<path d="M553.0,118.0 L578.0,137.0 L595.0,157.0 L619.0,178.0 L650.6,182.0 L672.0,185.0" fill="none" stroke="#9fcb94" stroke-width="5" stroke-linejoin="round"/>
<polygon points="621.0,240.0 640.0,238.0 640.0,300.0 625.0,300.0 619.0,276.0" fill="#efdcd8"/>
<polygon points="677.5,268.8 702.4,268.8 702.4,307.5 677.5,307.5" fill="#efdcd8"/>
<polygon points="640.0,239.0 663.7,240.0 683.0,261.8 683.0,286.8 670.6,295.0 652.6,299.2 636.0,292.3 631.0,270.0 633.0,250.0" fill="#a9caa9"/>
<path d="M512.0,96.0 L535.0,112.0 L553.0,127.0 L575.5,150.0 L590.7,171.0 L610.0,183.4 L636.0,188.3 L660.0,189.0 L690.0,188.0" fill="none" stroke="#a8d0dd" stroke-width="8" stroke-linejoin="round" stroke-linecap="round"/>
<polygon points="636.0,184.0 670.0,185.0 702.0,188.0 702.0,226.0 712.0,240.0 690.0,246.0 672.0,230.0 650.0,196.0 636.0,196.0" fill="#a8d0dd"/>
<polygon points="687.0,246.0 713.5,244.0 737.4,266.0 746.8,283.5 757.5,303.6 767.0,323.7 775.0,343.0 742.8,343.0 736.0,328.0 730.0,312.0 722.0,292.0 708.0,275.7 690.0,255.0" fill="#a8d0dd"/>
<path d="M750.0,259.0 L758.0,264.0 L776.3,283.5 L780.3,303.6 L779.5,325.0 L779.5,343.0" fill="none" stroke="#a8d0dd" stroke-width="7" stroke-linejoin="round"/>
<polygon points="781.0,306.0 797.5,300.0 815.5,290.0 832.0,286.0 853.0,285.0 876.0,273.0 892.0,264.0 902.0,254.0 908.0,246.0 911.5,215.0 918.4,194.0 928.5,176.5 939.5,158.5 942.0,153.0 948.0,153.0 944.9,161.5 933.5,179.5 924.4,196.5 917.5,215.3 915.0,250.0 914.0,261.0 898.0,277.0 878.0,287.0 858.0,297.0 843.0,302.0 822.0,303.0 812.0,321.0 797.0,333.0 784.0,337.0 781.0,325.0" fill="#a8d0dd"/>
<polygon points="516.0,58.0 540.0,58.0 532.0,75.0 516.0,82.0" fill="#a8d0dd" opacity="0.6"/>
<polygon points="728.0,256.0 744.0,257.0 746.0,268.0 732.0,268.0" fill="#a8d0dd"/>
<path d="M978.0,80.0 L983.0,100.0 L987.0,134.0" fill="none" stroke="#a8d0dd" stroke-width="2.5"/>
<polygon points="662.0,200.0 679.0,202.0 679.0,228.0 666.0,230.0" fill="#c3e3b6"/>
<polygon points="737.4,268.0 745.0,264.5 753.5,263.4 764.2,274.0 771.0,287.5 773.6,303.6 774.3,323.7 773.6,341.0 767.0,323.7 757.5,303.6 746.8,283.5" fill="#c6ecbe" stroke="#9dc896" stroke-width="0.8"/>
<path d="M570.0,58.0 L569.3,76.0 L563.0,85.7 L552.7,86.4 L557.5,95.4 L564.4,106.4 L570.0,113.4 L577.0,121.7 L582.4,130.0 L583.8,138.3 L589.4,146.6 L595.0,153.0" fill="none" stroke="#f3c78f" stroke-width="3" stroke-linejoin="round" stroke-linecap="round"/>
<path d="M516.0,87.0 L526.0,91.0" fill="none" stroke="#f3c78f" stroke-width="3" stroke-linejoin="round" stroke-linecap="round"/>
<path d="M590.7,58.0 L601.8,66.3 L612.9,77.4 L621.2,85.7 L636.0,99.5 L649.8,113.4 L663.7,123.0 L672.0,131.4 L680.3,141.0 L688.6,153.0 L700.0,168.0" fill="none" stroke="#f3c78f" stroke-width="3" stroke-linejoin="round" stroke-linecap="round"/>
<path d="M620.0,58.0 L612.9,78.8 L601.8,89.8 L590.7,96.8 L581.0,102.3 L571.4,112.0 L563.0,116.0 L561.7,121.7" fill="none" stroke="#f3c78f" stroke-width="3" stroke-linejoin="round" stroke-linecap="round"/>
<path d="M636.0,62.0 L641.5,78.8 L646.4,94.0 L647.0,106.4 L645.7,120.3 L645.7,153.0 L650.0,170.0" fill="none" stroke="#f3c78f" stroke-width="3" stroke-linejoin="round" stroke-linecap="round"/>
<path d="M669.2,58.0 L677.5,76.0 L684.4,92.6 L691.4,106.4 L697.0,117.5 L703.0,128.0" fill="none" stroke="#f3c78f" stroke-width="3" stroke-linejoin="round" stroke-linecap="round"/>
<path d="M703.8,58.0 L699.7,74.6 L706.6,83.0 L708.0,92.6 L713.5,99.5 L719.0,110.6 L712.0,121.7" fill="none" stroke="#f3c78f" stroke-width="3" stroke-linejoin="round" stroke-linecap="round"/>
<path d="M737.7,58.0 L737.7,153.0" fill="none" stroke="#f3c78f" stroke-width="3" stroke-linejoin="round" stroke-linecap="round"/>
<path d="M761.5,58.0 L767.0,85.7 L771.2,113.4 L774.0,153.0" fill="none" stroke="#f3c78f" stroke-width="3" stroke-linejoin="round" stroke-linecap="round"/>
<path d="M781.0,58.0 L767.0,84.3" fill="none" stroke="#f3c78f" stroke-width="3" stroke-linejoin="round" stroke-linecap="round"/>
<path d="M807.2,58.0 L812.7,78.8 L811.4,99.5 L805.8,113.4 L804.4,153.0 L805.0,170.0" fill="none" stroke="#f3c78f" stroke-width="3" stroke-linejoin="round" stroke-linecap="round"/>
<path d="M789.2,101.0 L811.4,99.5 L822.4,102.3 L839.0,94.0 L859.8,74.6 L876.0,62.0 L880.0,58.0" fill="none" stroke="#f3c78f" stroke-width="3" stroke-linejoin="round" stroke-linecap="round"/>
<path d="M787.8,153.0 L825.2,135.5 L852.9,124.4 L873.0,114.7 L914.5,88.5 L956.0,63.5 L961.6,58.0" fill="none" stroke="#f3c78f" stroke-width="3" stroke-linejoin="round" stroke-linecap="round"/>
<path d="M841.8,153.0 L852.9,135.5 L860.0,126.0" fill="none" stroke="#f3c78f" stroke-width="3" stroke-linejoin="round" stroke-linecap="round"/>
<path d="M875.8,65.0 L898.0,99.5 L914.5,120.3 L938.0,141.0" fill="none" stroke="#f3c78f" stroke-width="3" stroke-linejoin="round" stroke-linecap="round"/>
<path d="M891.0,153.0 L932.5,103.7 L972.7,74.6 L993.0,63.5" fill="none" stroke="#f3c78f" stroke-width="3" stroke-linejoin="round" stroke-linecap="round"/>
<path d="M972.7,58.0 L972.7,76.0" fill="none" stroke="#f3c78f" stroke-width="3" stroke-linejoin="round" stroke-linecap="round"/>
<path d="M886.8,153.0 L875.8,187.6" fill="none" stroke="#f3c78f" stroke-width="3" stroke-linejoin="round" stroke-linecap="round"/>
<path d="M776.8,153.0 L818.3,171.0 L839.0,180.7 L876.0,197.3" fill="none" stroke="#f3c78f" stroke-width="3" stroke-linejoin="round" stroke-linecap="round"/>
<path d="M755.0,160.0 L756.0,175.0" fill="none" stroke="#f3c78f" stroke-width="3" stroke-linejoin="round" stroke-linecap="round"/>
<path d="M760.0,240.2 L876.0,240.2" fill="none" stroke="#f3c78f" stroke-width="3" stroke-linejoin="round" stroke-linecap="round"/>
<path d="M873.0,201.4 L949.0,212.5 L963.0,218.0 L983.7,230.5 L993.0,233.3" fill="none" stroke="#f3c78f" stroke-width="3" stroke-linejoin="round" stroke-linecap="round"/>
<path d="M873.0,221.5 L890.0,221.5 L898.0,233.3 L993.0,233.3" fill="none" stroke="#f3c78f" stroke-width="3" stroke-linejoin="round" stroke-linecap="round"/>
<path d="M516.0,208.4 L539.5,201.5 L553.4,207.0 L564.4,212.5 L588.0,214.0 L599.0,216.7 L612.9,212.5 L636.0,208.4 L660.0,207.0 L686.0,210.0" fill="none" stroke="#f3c78f" stroke-width="3" stroke-linejoin="round" stroke-linecap="round"/>
<path d="M612.9,205.0 L630.0,200.0 L650.0,197.0 L672.0,193.0" fill="none" stroke="#f3c78f" stroke-width="3" stroke-linejoin="round" stroke-linecap="round"/>
<path d="M516.0,198.7 L524.3,211.0 L531.2,225.0 L536.8,248.0 L543.7,261.8 L561.7,279.8 L578.3,295.0 L593.5,309.0 L599.0,320.0 L606.0,343.0" fill="none" stroke="#f3c78f" stroke-width="3" stroke-linejoin="round" stroke-linecap="round"/>
<path d="M585.2,248.0 L606.0,233.3 L636.0,220.8 L660.0,212.0" fill="none" stroke="#f3c78f" stroke-width="3" stroke-linejoin="round" stroke-linecap="round"/>
<path d="M636.0,182.0 L685.8,184.8 L702.4,183.4" fill="none" stroke="#f3c78f" stroke-width="3" stroke-linejoin="round" stroke-linecap="round"/>
<path d="M661.0,153.0 L669.2,173.8 L672.0,183.4 L656.8,189.0 L649.8,208.4" fill="none" stroke="#f3c78f" stroke-width="3" stroke-linejoin="round" stroke-linecap="round"/>
<path d="M543.7,343.0 L585.2,329.7 L636.0,310.3" fill="none" stroke="#f3c78f" stroke-width="3" stroke-linejoin="round" stroke-linecap="round"/>
<path d="M756.0,259.0 L776.8,275.7 L833.5,275.7 L852.9,268.8 L876.0,268.8" fill="none" stroke="#f3c78f" stroke-width="3" stroke-linejoin="round" stroke-linecap="round"/>
<path d="M805.0,248.0 L805.0,293.7 L814.0,303.4 L823.8,307.5 L823.8,325.5" fill="none" stroke="#f3c78f" stroke-width="3" stroke-linejoin="round" stroke-linecap="round"/>
<path d="M833.5,248.0 L876.0,268.8 L914.5,289.5 L956.0,314.4 L958.8,317.2" fill="none" stroke="#f3c78f" stroke-width="3" stroke-linejoin="round" stroke-linecap="round"/>
<path d="M925.6,299.2 L929.7,343.0" fill="none" stroke="#f3c78f" stroke-width="3" stroke-linejoin="round" stroke-linecap="round"/>
<path d="M850.0,205.0 L873.0,201.4" fill="none" stroke="#f3c78f" stroke-width="3" stroke-linejoin="round" stroke-linecap="round"/>
<path d="M958.8,317.2 L993.0,311.7" fill="none" stroke="#f2b09a" stroke-width="3.2"/>
<path d="M516.0,307.5 L543.7,304.7 L560.3,299.2 L579.7,292.3 L599.0,286.8 L618.4,281.2 L621.2,275.7 L615.7,248.0" fill="none" stroke="#eeaa96" stroke-width="3" stroke-linejoin="round"/>
<path d="M553.4,87.0 L568.6,85.7 L578.3,89.8 L586.6,96.8" fill="none" stroke="#ecec9c" stroke-width="2.6" stroke-linejoin="round" stroke-linecap="round"/>
<path d="M604.6,121.7 L607.3,153.0 L615.0,170.0" fill="none" stroke="#ecec9c" stroke-width="2.6" stroke-linejoin="round" stroke-linecap="round"/>
<path d="M682.0,84.0 L700.0,90.0 L720.0,86.0 L733.0,82.0" fill="none" stroke="#ecec9c" stroke-width="2.6" stroke-linejoin="round" stroke-linecap="round"/>
<path d="M787.8,117.5 L818.3,106.4 L830.7,92.6" fill="none" stroke="#ecec9c" stroke-width="2.6" stroke-linejoin="round" stroke-linecap="round"/>
<path d="M761.0,115.0 L764.0,150.0" fill="none" stroke="#ecec9c" stroke-width="2.6" stroke-linejoin="round" stroke-linecap="round"/>
<path d="M852.9,161.3 L876.0,171.0" fill="none" stroke="#ecec9c" stroke-width="2.6" stroke-linejoin="round" stroke-linecap="round"/>
<path d="M959.9,190.4 L993.0,190.4" fill="none" stroke="#ecec9c" stroke-width="2.6" stroke-linejoin="round" stroke-linecap="round"/>
<path d="M963.0,194.5 L945.0,248.0 L936.7,248.0 L924.2,268.8 L873.0,303.4" fill="none" stroke="#ecec9c" stroke-width="2.6" stroke-linejoin="round" stroke-linecap="round"/>
<path d="M972.7,194.5 L993.0,205.6" fill="none" stroke="#ecec9c" stroke-width="2.6" stroke-linejoin="round" stroke-linecap="round"/>
<path d="M924.2,268.8 L925.6,299.2" fill="none" stroke="#ecec9c" stroke-width="2.6" stroke-linejoin="round" stroke-linecap="round"/>
<path d="M956.0,248.0 L963.0,261.8 L956.0,275.7 L954.7,289.5 L949.0,306.0 L930.0,320.0" fill="none" stroke="#ecec9c" stroke-width="2.6" stroke-linejoin="round" stroke-linecap="round"/>
<path d="M963.0,261.8 L988.0,285.4" fill="none" stroke="#ecec9c" stroke-width="2.6" stroke-linejoin="round" stroke-linecap="round"/>
<path d="M516.0,249.0 L618.4,249.0" fill="none" stroke="#ecec9c" stroke-width="2.6" stroke-linejoin="round" stroke-linecap="round"/>
<path d="M516.0,273.0 L561.7,263.2 L599.0,252.2" fill="none" stroke="#ecec9c" stroke-width="2.6" stroke-linejoin="round" stroke-linecap="round"/>
<path d="M599.0,252.2 L604.6,261.8 L615.7,275.7" fill="none" stroke="#ecec9c" stroke-width="2.6" stroke-linejoin="round" stroke-linecap="round"/>
<path d="M560.3,259.0 L560.3,275.7" fill="none" stroke="#ecec9c" stroke-width="2.6" stroke-linejoin="round" stroke-linecap="round"/>
<path d="M648.5,307.5 L666.4,300.6 L667.8,295.0 L674.8,295.7" fill="none" stroke="#ecec9c" stroke-width="2.6" stroke-linejoin="round" stroke-linecap="round"/>
<path d="M760.0,233.3 L876.0,233.3" fill="none" stroke="#ecec9c" stroke-width="2.6" stroke-linejoin="round" stroke-linecap="round"/>
<path d="M694.0,172.4 L688.6,180.7 L687.2,208.4 L694.0,222.2" fill="none" stroke="#ecec9c" stroke-width="2.6" stroke-linejoin="round" stroke-linecap="round"/>
<path d="M900.0,330.0 L935.0,320.0 L960.0,335.0" fill="none" stroke="#ecec9c" stroke-width="2.6" stroke-linejoin="round" stroke-linecap="round"/>
<path d="M516.0,92.0 L543.7,120.3 L557.5,141.0 L564.4,153.0 L574.1,166.8 L588.0,180.7 L604.6,190.4 L636.0,196.0 L660.0,198.0" fill="none" stroke="#e38c9c" stroke-width="3.2" stroke-linejoin="round" stroke-linecap="round"/>
<path d="M534.0,244.4 L554.8,234.7 L574.1,226.4 L581.0,212.5 L593.5,207.0 L612.9,205.6 L636.0,205.6 L660.0,200.0 L676.0,194.0" fill="none" stroke="#e38c9c" stroke-width="3.2" stroke-linejoin="round" stroke-linecap="round"/>
<path d="M665.0,248.0 L684.4,268.8 L684.4,282.6 L674.8,300.6 L656.8,307.5 L636.0,303.4 L626.7,289.5 L619.8,275.7 L617.0,248.0 L625.0,232.0 L640.0,222.0" fill="none" stroke="#e38c9c" stroke-width="3.2" stroke-linejoin="round" stroke-linecap="round"/>
<path d="M684.4,248.0 L708.0,275.7 L721.8,292.3 L726.0,306.0 L713.5,325.5 L709.4,343.0" fill="none" stroke="#e38c9c" stroke-width="3.2" stroke-linejoin="round" stroke-linecap="round"/>
<path d="M713.5,289.5 L746.7,248.0 L760.0,240.0" fill="none" stroke="#e38c9c" stroke-width="3.2" stroke-linejoin="round" stroke-linecap="round"/>
<path d="M647.0,343.0 L656.8,307.5" fill="none" stroke="#e38c9c" stroke-width="3.2" stroke-linejoin="round" stroke-linecap="round"/>
<path d="M699.7,343.0 L699.7,306.0" fill="none" stroke="#e38c9c" stroke-width="3.2" stroke-linejoin="round" stroke-linecap="round"/>
<path d="M672.0,196.0 L680.0,215.0 L684.0,235.0 L684.4,248.0" fill="none" stroke="#e38c9c" stroke-width="3.2" stroke-linejoin="round" stroke-linecap="round"/>
<path d="M756.0,256.3 L797.5,256.3 L828.0,263.2" fill="none" stroke="#e38c9c" stroke-width="3.2" stroke-linejoin="round" stroke-linecap="round"/>
<path d="M822.4,321.4 L846.0,313.0 L857.0,296.4 L876.0,288.0 L889.6,279.8 L907.6,273.0 L917.3,261.8 L921.4,248.0 L935.3,226.4 L956.0,205.6 L972.7,184.8 L992.0,160.0" fill="none" stroke="#e38c9c" stroke-width="3.2" stroke-linejoin="round" stroke-linecap="round"/>
<path d="M814.0,173.8 L839.0,164.0 L864.0,153.0 L877.4,147.0 L918.8,145.0 L935.3,143.8 L950.5,138.3 L969.9,141.0 L993.0,137.0" fill="none" stroke="#e38c9c" stroke-width="3.2" stroke-linejoin="round" stroke-linecap="round"/>
<path d="M790.0,336.0 L810.0,330.0 L822.4,321.4" fill="none" stroke="#e38c9c" stroke-width="3.2" stroke-linejoin="round" stroke-linecap="round"/>
<path d="M636.0,194.5 L652.6,198.7 L663.7,194.5 L684.4,193.0 L702.4,194.5" fill="none" stroke="#e38c9c" stroke-width="3.2" stroke-linejoin="round" stroke-linecap="round"/>
<path d="M649.8,194.5 L655.4,215.3 L663.7,236.0 L667.8,248.0" fill="none" stroke="#e38c9c" stroke-width="3.2" stroke-linejoin="round" stroke-linecap="round"/>
<path d="M636.0,208.4 L656.8,218.0 L684.4,226.4 L702.4,225.0" fill="none" stroke="#e38c9c" stroke-width="3.2" stroke-linejoin="round" stroke-linecap="round"/>
<path d="M670.6,191.8 L677.5,211.0 L681.7,248.0" fill="none" stroke="#e38c9c" stroke-width="3.2" stroke-linejoin="round" stroke-linecap="round"/>
<path d="M889.6,58.0 L935.3,102.3 L983.7,153.0 L993.0,163.0" fill="none" stroke="#9a9898" stroke-width="1.3"/>
<path d="M873.0,143.8 L935.3,99.5 L956.0,71.8 L965.0,58.0" fill="none" stroke="#9a9898" stroke-width="1.3"/>
<path d="M841.8,98.0 L841.8,117.5 L833.5,141.0 L830.7,153.0 L820.0,175.0" fill="none" stroke="#9a9898" stroke-width="1.3"/>
<path d="M924.2,248.0 L992.0,169.6" fill="none" stroke="#9a9898" stroke-width="1.3"/>
<path d="M873.0,273.0 L924.2,248.0" fill="none" stroke="#9a9898" stroke-width="1.3"/>
<path d="M947.7,343.0 L993.0,285.4" fill="none" stroke="#9a9898" stroke-width="1.3"/>
<path d="M700.0,343.0 L720.0,300.0 L745.0,262.0" fill="none" stroke="#9a9898" stroke-width="1.3"/>
<path d="M800.0,280.0 L805.0,300.0 L812.0,330.0" fill="none" stroke="#9a9898" stroke-width="1.3"/>
<polygon points="626,124 622.8,129 629.2,129" fill="#d58f55"/>
<polygon points="609,148 605.8,153 612.2,153" fill="#d58f55"/>
<polygon points="627,153 623.8,158 630.2,158" fill="#d58f55"/>
<polygon points="900.8,75.5 897.5999999999999,80.5 904.0,80.5" fill="#d58f55"/>
<polygon points="897,101 893.8,106 900.2,106" fill="#d58f55"/>
<polygon points="903,139 899.8,144 906.2,144" fill="#d58f55"/>
<polygon points="892,165 888.8,170 895.2,170" fill="#d58f55"/>
<polygon points="922,173 918.8,178 925.2,178" fill="#d58f55"/>
<polygon points="894,230 890.8,235 897.2,235" fill="#d58f55"/>
<polygon points="920,315 916.8,320 923.2,320" fill="#d58f55"/>
<polygon points="639,209 635.8,214 642.2,214" fill="#d58f55"/>
</svg>
<div class="t " style="left:515.00px;top:60.40px;font-size:9.8px;color:#404040;font-family:'Liberation Sans',sans-serif;text-shadow:0 0 1.5px #fff,0 0 1.5px #fff;">ookmont</div>
<div class="t " style="left:649.80px;top:84.83px;font-size:9.65px;color:#444;font-family:'Liberation Sans',sans-serif;text-shadow:0 0 1.5px #fff,0 0 1.5px #fff;">Cleveland Park</div>
<div class="t " style="left:716.00px;top:116.03px;font-size:9.65px;color:#444;font-family:'Liberation Sans',sans-serif;text-shadow:0 0 1.5px #fff,0 0 1.5px #fff;">Columbia Heights</div>
<div class="t " style="left:610.50px;top:130.73px;font-size:9.65px;color:#444;font-family:'Liberation Sans',sans-serif;text-shadow:0 0 1.5px #fff,0 0 1.5px #fff;">Glover Park</div>
<div class="t " style="left:875.80px;top:63.22px;font-size:11.2px;color:#444;font-family:'Liberation Sans',sans-serif;text-shadow:0 0 1.5px #fff,0 0 1.5px #fff;letter-spacing:0.62px">Mount Rainier</div>
<div class="t " style="left:933.90px;top:91.51px;font-size:9.2px;color:#444;font-family:'Liberation Sans',sans-serif;text-shadow:0 0 1.5px #fff,0 0 1.5px #fff;">Colmar Manor</div>
<div class="t " style="left:931.10px;top:177.83px;font-size:9.65px;color:#444;font-family:'Liberation Sans',sans-serif;text-shadow:0 0 1.5px #fff,0 0 1.5px #fff;">Eastland Gard</div>
<div class="t " style="left:875.80px;top:187.60px;font-size:9.8px;color:#444;font-family:'Liberation Sans',sans-serif;text-shadow:0 0 1.5px #fff,0 0 1.5px #fff;">Langston</div>
<div class="t " style="left:976.80px;top:137.07px;font-size:9.6px;color:#606060;font-family:'Liberation Sans',sans-serif;text-shadow:0 0 1.5px #fff,0 0 1.5px #fff;">Nor</div>
<div class="t " style="left:666.40px;top:190.40px;font-size:9.8px;color:#444;font-family:'Liberation Sans',sans-serif;text-shadow:0 0 1.5px #fff,0 0 1.5px #fff;">Foggy B</div>
<div class="t " style="left:692.00px;top:161.77px;font-size:10.2px;color:#404040;font-family:'Liberation Sans',sans-serif;text-shadow:0 0 1.5px #fff,0 0 1.5px #fff;">Du</div>
<div class="t " style="left:630.90px;top:207.27px;font-size:9.6px;color:#444;font-family:'Liberation Sans',sans-serif;text-shadow:0 0 1.5px #fff,0 0 1.5px #fff;">Rosslyn</div>
<div class="t " style="left:592.80px;top:226.82px;font-size:12.5px;color:#444;font-family:'Liberation Sans',sans-serif;text-shadow:0 0 1.5px #fff,0 0 1.5px #fff;letter-spacing:0.27px">Arlington</div>
<div class="t " style="left:527.80px;top:251.90px;font-size:9.8px;color:#444;font-family:'Liberation Sans',sans-serif;text-shadow:0 0 1.5px #fff,0 0 1.5px #fff;">Virginia Square</div>
<div class="t " style="left:560.30px;top:294.24px;font-size:10px;color:#444;font-family:'Liberation Sans',sans-serif;text-shadow:0 0 1.5px #fff,0 0 1.5px #fff;letter-spacing:0.05px">Arlington Heights</div>
<div class="t " style="left:554.00px;top:310.39px;font-size:9.7px;color:#444;font-family:'Liberation Sans',sans-serif;text-shadow:0 0 1.5px #fff,0 0 1.5px #fff;">Alcova Heights</div>
<div class="t " style="left:647.80px;top:321.49px;font-size:9.7px;color:#444;font-family:'Liberation Sans',sans-serif;text-shadow:0 0 1.5px #fff,0 0 1.5px #fff;">Pentagon City</div>
<div class="t " style="left:552.70px;top:336.69px;font-size:9.7px;color:#444;font-family:'Liberation Sans',sans-serif;text-shadow:0 0 1.5px #fff,0 0 1.5px #fff;">Barcroft</div>
<div class="t " style="left:846.00px;top:306.69px;font-size:9.7px;color:#444;font-family:'Liberation Sans',sans-serif;text-shadow:0 0 1.5px #fff,0 0 1.5px #fff;">Anacos</div>
<div class="t " style="left:701.00px;top:211.20px;font-size:13px;color:#404040;font-family:'Liberation Sans',sans-serif;text-shadow:0 0 1.5px #fff,0 0 1.5px #fff;">Wash</div>
<div class="t " style="left:667.00px;top:205.94px;font-size:9.4px;color:#6f9fd0;font-family:'Liberation Sans',sans-serif;text-shadow:0 0 1.5px #fff,0 0 1.5px #fff;"><i>Potomac</i></div>
<div class="t " style="left:674.80px;top:215.64px;font-size:9.4px;color:#6f9fd0;font-family:'Liberation Sans',sans-serif;text-shadow:0 0 1.5px #fff,0 0 1.5px #fff;"><i>River</i></div>
<div class="t " style="left:708.70px;top:238.27px;font-size:9.6px;color:#3e9a3e;font-family:'Liberation Sans',sans-serif;text-shadow:0 0 1.5px #fff,0 0 1.5px #fff;letter-spacing:0.3px"><i>National</i></div>
<div class="t " style="left:717.40px;top:248.17px;font-size:9.6px;color:#3e9a3e;font-family:'Liberation Sans',sans-serif;text-shadow:0 0 1.5px #fff,0 0 1.5px #fff;letter-spacing:0.3px"><i>Mall</i></div>
<div class="t " style="left:570.00px;top:170.38px;font-size:9px;color:#7a6a90;font-family:'Liberation Sans',sans-serif;transform:rotate(37deg);transform-origin:0 0;letter-spacing:0.5px"><i>Virginia</i></div>
<div class="t " style="left:611.50px;top:204.86px;font-size:9.5px;color:#c8434f;font-family:'Liberation Sans',sans-serif;text-shadow:0 0 1.5px #fff,0 0 1.5px #fff;"><i>73</i></div>
<div class="t " style="left:573.40px;top:220.66px;font-size:9.5px;color:#c8434f;font-family:'Liberation Sans',sans-serif;text-shadow:0 0 1.5px #fff,0 0 1.5px #fff;"><i>72</i></div>
<div class="t " style="left:542.30px;top:233.76px;font-size:9.5px;color:#c8434f;font-family:'Liberation Sans',sans-serif;text-shadow:0 0 1.5px #fff,0 0 1.5px #fff;"><i>71</i></div>
<div class="t " style="left:516.00px;top:258.36px;font-size:9.5px;color:#c8434f;font-family:'Liberation Sans',sans-serif;text-shadow:0 0 1.5px #fff,0 0 1.5px #fff;"><i>71</i></div>
<div class="t " style="left:712.80px;top:279.66px;font-size:9.5px;color:#c8434f;font-family:'Liberation Sans',sans-serif;text-shadow:0 0 1.5px #fff,0 0 1.5px #fff;"><i>10C</i></div>
<div class="t " style="left:706.00px;top:290.06px;font-size:9.5px;color:#c8434f;font-family:'Liberation Sans',sans-serif;text-shadow:0 0 1.5px #fff,0 0 1.5px #fff;"><i>10A</i></div>
<div class="t " style="left:707.30px;top:298.36px;font-size:9.5px;color:#c8434f;font-family:'Liberation Sans',sans-serif;text-shadow:0 0 1.5px #fff,0 0 1.5px #fff;"><i>10B</i></div>
<div class="t " style="left:694.00px;top:305.36px;font-size:9.5px;color:#c8434f;font-family:'Liberation Sans',sans-serif;text-shadow:0 0 1.5px #fff,0 0 1.5px #fff;"><i>8A</i></div>
<div class="t " style="left:658.80px;top:305.96px;font-size:9.5px;color:#c8434f;font-family:'Liberation Sans',sans-serif;text-shadow:0 0 1.5px #fff,0 0 1.5px #fff;"><i>8C</i></div>
<div class="t " style="left:761.00px;top:254.36px;font-size:9.5px;color:#c8434f;font-family:'Liberation Sans',sans-serif;text-shadow:0 0 1.5px #fff,0 0 1.5px #fff;"><i>4B</i></div>
<div class="t " style="left:776.00px;top:254.36px;font-size:9.5px;color:#c8434f;font-family:'Liberation Sans',sans-serif;text-shadow:0 0 1.5px #fff,0 0 1.5px #fff;"><i>4</i></div>
<div class="t " style="left:784.00px;top:254.36px;font-size:9.5px;color:#c8434f;font-family:'Liberation Sans',sans-serif;text-shadow:0 0 1.5px #fff,0 0 1.5px #fff;"><i>5</i></div>
<div class="t " style="left:791.00px;top:254.36px;font-size:9.5px;color:#c8434f;font-family:'Liberation Sans',sans-serif;text-shadow:0 0 1.5px #fff,0 0 1.5px #fff;"><i>1A</i></div>
<div class="t " style="left:795.00px;top:243.86px;font-size:9.5px;color:#c8434f;font-family:'Liberation Sans',sans-serif;text-shadow:0 0 1.5px #fff,0 0 1.5px #fff;"><i>7</i></div>
<div class="t " style="left:733.00px;top:267.16px;font-size:9.5px;color:#c8434f;font-family:'Liberation Sans',sans-serif;text-shadow:0 0 1.5px #fff,0 0 1.5px #fff;"><i>1</i></div>
<div class="t " style="left:746.00px;top:262.36px;font-size:9.5px;color:#c8434f;font-family:'Liberation Sans',sans-serif;text-shadow:0 0 1.5px #fff,0 0 1.5px #fff;"><i>2</i></div>
<div class="t " style="left:887.00px;top:276.36px;font-size:9.5px;color:#c8434f;font-family:'Liberation Sans',sans-serif;text-shadow:0 0 1.5px #fff,0 0 1.5px #fff;"><i>1D</i></div>
<div class="t " style="left:865.00px;top:287.36px;font-size:9.5px;color:#c8434f;font-family:'Liberation Sans',sans-serif;text-shadow:0 0 1.5px #fff,0 0 1.5px #fff;"><i>18 C</i></div>
<div class="t " style="left:849.00px;top:281.36px;font-size:9.5px;color:#c8434f;font-family:'Liberation Sans',sans-serif;text-shadow:0 0 1.5px #fff,0 0 1.5px #fff;"><i>2</i></div>
<div class="t " style="left:818.00px;top:337.36px;font-size:9.5px;color:#c8434f;font-family:'Liberation Sans',sans-serif;text-shadow:0 0 1.5px #fff,0 0 1.5px #fff;"><i>3A</i></div>
<svg class="a" style="left:516px;top:58px" width="477" height="284" viewBox="516 58 477 284">
<g filter="url(#bl)" fill="#000" opacity="0.7">
<polygon points="701,57.8 704,46.8 713,41.8 717,46.8 709,55.8"/>
<polygon points="609.5,73.5 612.5,62.5 621.5,57.5 625.5,62.5 617.5,71.5"/>
<polygon points="817.8,77.8 820.8,66.8 829.8,61.8 833.8,66.8 825.8,75.8"/>
<polygon points="841.9,93.6 844.9,82.6 853.9,77.6 857.9,82.6 849.9,91.6"/>
<polygon points="741.3,95.1 744.3,84.1 753.3,79.1 757.3,84.1 749.3,93.1"/>
<polygon points="780.5,127.6 783.5,116.6 792.5,111.6 796.5,116.6 788.5,125.6"/>
<polygon points="609.1,128.8 612.1,117.80000000000001 621.1,112.80000000000001 625.1,117.80000000000001 617.1,126.80000000000001"/>
<polygon points="701.8,149.8 704.8,138.8 713.8,133.8 717.8,138.8 709.8,147.8"/>
<polygon points="725.2,157.4 728.2,146.4 737.2,141.4 741.2,146.4 733.2,155.4"/>
<polygon points="904.3,159.3 907.3,148.3 916.3,143.3 920.3,148.3 912.3,157.3"/>
<polygon points="713.2,160.10000000000002 716.2,149.10000000000002 725.2,144.10000000000002 729.2,149.10000000000002 721.2,158.10000000000002"/>
<polygon points="718.4,173.0 721.4,162.0 730.4,157.0 734.4,162.0 726.4,171.0"/>
<polygon points="752.6,173.0 755.6,162.0 764.6,157.0 768.6,162.0 760.6,171.0"/>
<polygon points="743.3,176.70000000000002 746.3,165.70000000000002 755.3,160.70000000000002 759.3,165.70000000000002 751.3,174.70000000000002"/>
<polygon points="734.6,183.3 737.6,172.3 746.6,167.3 750.6,172.3 742.6,181.3"/>
<polygon points="772.1,190.3 775.1,179.3 784.1,174.3 788.1,179.3 780.1,188.3"/>
<polygon points="716,192.3 719,181.3 728,176.3 732,181.3 724,190.3"/>
<polygon points="756.7,195.8 759.7,184.8 768.7,179.8 772.7,184.8 764.7,193.8"/>
<polygon points="781.5,195.8 784.5,184.8 793.5,179.8 797.5,184.8 789.5,193.8"/>
<polygon points="734.5,198.9 737.5,187.9 746.5,182.9 750.5,187.9 742.5,196.9"/>
<polygon points="801,201.8 804,190.8 813,185.8 817,190.8 809,199.8"/>
<polygon points="714.3,202.60000000000002 717.3,191.60000000000002 726.3,186.60000000000002 730.3,191.60000000000002 722.3,200.60000000000002"/>
<polygon points="792,203.5 795,192.5 804,187.5 808,192.5 800,201.5"/>
<polygon points="808.8,204.3 811.8,193.3 820.8,188.3 824.8,193.3 816.8,202.3"/>
<polygon points="752.5,205.10000000000002 755.5,194.10000000000002 764.5,189.10000000000002 768.5,194.10000000000002 760.5,203.10000000000002"/>
<polygon points="771,208.0 774,197.0 783,192.0 787,197.0 779,206.0"/>
<polygon points="729,208.4 732,197.4 741,192.4 745,197.4 737,206.4"/>
<polygon points="721,213.8 724,202.8 733,197.8 737,202.8 729,211.8"/>
<polygon points="710.6,221.3 713.6,210.3 722.6,205.3 726.6,210.3 718.6,219.3"/>
<polygon points="725.9,221.3 728.9,210.3 737.9,205.3 741.9,210.3 733.9,219.3"/>
<polygon points="816.5,221.8 819.5,210.8 828.5,205.8 832.5,210.8 824.5,219.8"/>
<polygon points="791.5,224.20000000000002 794.5,213.20000000000002 803.5,208.20000000000002 807.5,213.20000000000002 799.5,222.20000000000002"/>
<polygon points="779.9,225.0 782.9,214.0 791.9,209.0 795.9,214.0 787.9,223.0"/>
<polygon points="842.8,225.0 845.8,214.0 854.8,209.0 858.8,214.0 850.8,223.0"/>
<polygon points="755,225.8 758,214.8 767,209.8 771,214.8 763,223.8"/>
<polygon points="826.5,227.20000000000002 829.5,216.20000000000002 838.5,211.20000000000002 842.5,216.20000000000002 834.5,225.20000000000002"/>
<polygon points="771,231.8 774,220.8 783,215.8 787,220.8 779,229.8"/>
<polygon points="763.6,236.70000000000002 766.6,225.70000000000002 775.6,220.70000000000002 779.6,225.70000000000002 771.6,234.70000000000002"/>
<polygon points="780.6,236.70000000000002 783.6,225.70000000000002 792.6,220.70000000000002 796.6,225.70000000000002 788.6,234.70000000000002"/>
<polygon points="748.3,240.8 751.3,229.8 760.3,224.8 764.3,229.8 756.3,238.8"/>
<polygon points="846.3,253.0 849.3,242.0 858.3,237.0 862.3,242.0 854.3,251.0"/>
<polygon points="841.3,284.5 844.3,273.5 853.3,268.5 857.3,273.5 849.3,282.5"/>
<polygon points="887.1,337.6 890.1,326.6 899.1,321.6 903.1,326.6 895.1,335.6"/>
</g>
<g transform="translate(700,36)"><path d="M0,23.2 C-2,17.5 -10.4,9.5 -10.4,0.3 C-10.4,-6.5 -5.5,-10.7 0,-10.7 C5.5,-10.7 10.4,-6.5 10.4,0.3 C10.4,9.5 2,17.5 0,23.2Z" fill="url(#pg)" stroke="#2a69a6" stroke-width="0.8"/><circle cx="0" cy="0" r="3.6" fill="#fff"/></g>
<g transform="translate(608.5,51.7)"><path d="M0,23.2 C-2,17.5 -10.4,9.5 -10.4,0.3 C-10.4,-6.5 -5.5,-10.7 0,-10.7 C5.5,-10.7 10.4,-6.5 10.4,0.3 C10.4,9.5 2,17.5 0,23.2Z" fill="url(#pg)" stroke="#2a69a6" stroke-width="0.8"/><circle cx="0" cy="0" r="3.6" fill="#fff"/></g>
<g transform="translate(816.8,56)"><path d="M0,23.2 C-2,17.5 -10.4,9.5 -10.4,0.3 C-10.4,-6.5 -5.5,-10.7 0,-10.7 C5.5,-10.7 10.4,-6.5 10.4,0.3 C10.4,9.5 2,17.5 0,23.2Z" fill="url(#pg)" stroke="#2a69a6" stroke-width="0.8"/><circle cx="0" cy="0" r="3.6" fill="#fff"/></g>
<g transform="translate(840.9,71.8)"><path d="M0,23.2 C-2,17.5 -10.4,9.5 -10.4,0.3 C-10.4,-6.5 -5.5,-10.7 0,-10.7 C5.5,-10.7 10.4,-6.5 10.4,0.3 C10.4,9.5 2,17.5 0,23.2Z" fill="url(#pg)" stroke="#2a69a6" stroke-width="0.8"/><circle cx="0" cy="0" r="3.6" fill="#fff"/></g>
<g transform="translate(740.3,73.3)"><path d="M0,23.2 C-2,17.5 -10.4,9.5 -10.4,0.3 C-10.4,-6.5 -5.5,-10.7 0,-10.7 C5.5,-10.7 10.4,-6.5 10.4,0.3 C10.4,9.5 2,17.5 0,23.2Z" fill="url(#pg)" stroke="#2a69a6" stroke-width="0.8"/><circle cx="0" cy="0" r="3.6" fill="#fff"/></g>
<g transform="translate(779.5,105.8)"><path d="M0,23.2 C-2,17.5 -10.4,9.5 -10.4,0.3 C-10.4,-6.5 -5.5,-10.7 0,-10.7 C5.5,-10.7 10.4,-6.5 10.4,0.3 C10.4,9.5 2,17.5 0,23.2Z" fill="url(#pg)" stroke="#2a69a6" stroke-width="0.8"/><circle cx="0" cy="0" r="3.6" fill="#fff"/></g>
<g transform="translate(608.1,107)"><path d="M0,23.2 C-2,17.5 -10.4,9.5 -10.4,0.3 C-10.4,-6.5 -5.5,-10.7 0,-10.7 C5.5,-10.7 10.4,-6.5 10.4,0.3 C10.4,9.5 2,17.5 0,23.2Z" fill="url(#pg)" stroke="#2a69a6" stroke-width="0.8"/><circle cx="0" cy="0" r="3.6" fill="#fff"/></g>
<g transform="translate(700.8,128)"><path d="M0,23.2 C-2,17.5 -10.4,9.5 -10.4,0.3 C-10.4,-6.5 -5.5,-10.7 0,-10.7 C5.5,-10.7 10.4,-6.5 10.4,0.3 C10.4,9.5 2,17.5 0,23.2Z" fill="url(#pg)" stroke="#2a69a6" stroke-width="0.8"/><circle cx="0" cy="0" r="3.6" fill="#fff"/></g>
<g transform="translate(724.2,135.6)"><path d="M0,23.2 C-2,17.5 -10.4,9.5 -10.4,0.3 C-10.4,-6.5 -5.5,-10.7 0,-10.7 C5.5,-10.7 10.4,-6.5 10.4,0.3 C10.4,9.5 2,17.5 0,23.2Z" fill="url(#pg)" stroke="#2a69a6" stroke-width="0.8"/><circle cx="0" cy="0" r="3.6" fill="#fff"/></g>
<g transform="translate(903.3,137.5)"><path d="M0,23.2 C-2,17.5 -10.4,9.5 -10.4,0.3 C-10.4,-6.5 -5.5,-10.7 0,-10.7 C5.5,-10.7 10.4,-6.5 10.4,0.3 C10.4,9.5 2,17.5 0,23.2Z" fill="url(#pg)" stroke="#2a69a6" stroke-width="0.8"/><circle cx="0" cy="0" r="3.6" fill="#fff"/></g>
<g transform="translate(712.2,138.3)"><path d="M0,23.2 C-2,17.5 -10.4,9.5 -10.4,0.3 C-10.4,-6.5 -5.5,-10.7 0,-10.7 C5.5,-10.7 10.4,-6.5 10.4,0.3 C10.4,9.5 2,17.5 0,23.2Z" fill="url(#pg)" stroke="#2a69a6" stroke-width="0.8"/><circle cx="0" cy="0" r="3.6" fill="#fff"/></g>
<g transform="translate(717.4,151.2)"><path d="M0,23.2 C-2,17.5 -10.4,9.5 -10.4,0.3 C-10.4,-6.5 -5.5,-10.7 0,-10.7 C5.5,-10.7 10.4,-6.5 10.4,0.3 C10.4,9.5 2,17.5 0,23.2Z" fill="url(#pg)" stroke="#2a69a6" stroke-width="0.8"/><circle cx="0" cy="0" r="3.6" fill="#fff"/></g>
<g transform="translate(751.6,151.2)"><path d="M0,23.2 C-2,17.5 -10.4,9.5 -10.4,0.3 C-10.4,-6.5 -5.5,-10.7 0,-10.7 C5.5,-10.7 10.4,-6.5 10.4,0.3 C10.4,9.5 2,17.5 0,23.2Z" fill="url(#pg)" stroke="#2a69a6" stroke-width="0.8"/><circle cx="0" cy="0" r="3.6" fill="#fff"/></g>
<g transform="translate(742.3,154.9)"><path d="M0,23.2 C-2,17.5 -10.4,9.5 -10.4,0.3 C-10.4,-6.5 -5.5,-10.7 0,-10.7 C5.5,-10.7 10.4,-6.5 10.4,0.3 C10.4,9.5 2,17.5 0,23.2Z" fill="url(#pg)" stroke="#2a69a6" stroke-width="0.8"/><circle cx="0" cy="0" r="3.6" fill="#fff"/></g>
<g transform="translate(733.6,161.5)"><path d="M0,23.2 C-2,17.5 -10.4,9.5 -10.4,0.3 C-10.4,-6.5 -5.5,-10.7 0,-10.7 C5.5,-10.7 10.4,-6.5 10.4,0.3 C10.4,9.5 2,17.5 0,23.2Z" fill="url(#pg)" stroke="#2a69a6" stroke-width="0.8"/><circle cx="0" cy="0" r="3.6" fill="#fff"/></g>
<g transform="translate(771.1,168.5)"><path d="M0,23.2 C-2,17.5 -10.4,9.5 -10.4,0.3 C-10.4,-6.5 -5.5,-10.7 0,-10.7 C5.5,-10.7 10.4,-6.5 10.4,0.3 C10.4,9.5 2,17.5 0,23.2Z" fill="url(#pg)" stroke="#2a69a6" stroke-width="0.8"/><circle cx="0" cy="0" r="3.6" fill="#fff"/></g>
<g transform="translate(715,170.5)"><path d="M0,23.2 C-2,17.5 -10.4,9.5 -10.4,0.3 C-10.4,-6.5 -5.5,-10.7 0,-10.7 C5.5,-10.7 10.4,-6.5 10.4,0.3 C10.4,9.5 2,17.5 0,23.2Z" fill="url(#pg)" stroke="#2a69a6" stroke-width="0.8"/><circle cx="0" cy="0" r="3.6" fill="#fff"/></g>
<g transform="translate(755.7,174)"><path d="M0,23.2 C-2,17.5 -10.4,9.5 -10.4,0.3 C-10.4,-6.5 -5.5,-10.7 0,-10.7 C5.5,-10.7 10.4,-6.5 10.4,0.3 C10.4,9.5 2,17.5 0,23.2Z" fill="url(#pg)" stroke="#2a69a6" stroke-width="0.8"/><circle cx="0" cy="0" r="3.6" fill="#fff"/></g>
<g transform="translate(780.5,174)"><path d="M0,23.2 C-2,17.5 -10.4,9.5 -10.4,0.3 C-10.4,-6.5 -5.5,-10.7 0,-10.7 C5.5,-10.7 10.4,-6.5 10.4,0.3 C10.4,9.5 2,17.5 0,23.2Z" fill="url(#pg)" stroke="#2a69a6" stroke-width="0.8"/><circle cx="0" cy="0" r="3.6" fill="#fff"/></g>
<g transform="translate(733.5,177.1)"><path d="M0,23.2 C-2,17.5 -10.4,9.5 -10.4,0.3 C-10.4,-6.5 -5.5,-10.7 0,-10.7 C5.5,-10.7 10.4,-6.5 10.4,0.3 C10.4,9.5 2,17.5 0,23.2Z" fill="url(#pg)" stroke="#2a69a6" stroke-width="0.8"/><circle cx="0" cy="0" r="3.6" fill="#fff"/></g>
<g transform="translate(800,180)"><path d="M0,23.2 C-2,17.5 -10.4,9.5 -10.4,0.3 C-10.4,-6.5 -5.5,-10.7 0,-10.7 C5.5,-10.7 10.4,-6.5 10.4,0.3 C10.4,9.5 2,17.5 0,23.2Z" fill="url(#pg)" stroke="#2a69a6" stroke-width="0.8"/><circle cx="0" cy="0" r="3.6" fill="#fff"/></g>
<g transform="translate(713.3,180.8)"><path d="M0,23.2 C-2,17.5 -10.4,9.5 -10.4,0.3 C-10.4,-6.5 -5.5,-10.7 0,-10.7 C5.5,-10.7 10.4,-6.5 10.4,0.3 C10.4,9.5 2,17.5 0,23.2Z" fill="url(#pg)" stroke="#2a69a6" stroke-width="0.8"/><circle cx="0" cy="0" r="3.6" fill="#fff"/></g>
<g transform="translate(791,181.7)"><path d="M0,23.2 C-2,17.5 -10.4,9.5 -10.4,0.3 C-10.4,-6.5 -5.5,-10.7 0,-10.7 C5.5,-10.7 10.4,-6.5 10.4,0.3 C10.4,9.5 2,17.5 0,23.2Z" fill="url(#pg)" stroke="#2a69a6" stroke-width="0.8"/><circle cx="0" cy="0" r="3.6" fill="#fff"/></g>
<g transform="translate(807.8,182.5)"><path d="M0,23.2 C-2,17.5 -10.4,9.5 -10.4,0.3 C-10.4,-6.5 -5.5,-10.7 0,-10.7 C5.5,-10.7 10.4,-6.5 10.4,0.3 C10.4,9.5 2,17.5 0,23.2Z" fill="url(#pg)" stroke="#2a69a6" stroke-width="0.8"/><circle cx="0" cy="0" r="3.6" fill="#fff"/></g>
<g transform="translate(751.5,183.3)"><path d="M0,23.2 C-2,17.5 -10.4,9.5 -10.4,0.3 C-10.4,-6.5 -5.5,-10.7 0,-10.7 C5.5,-10.7 10.4,-6.5 10.4,0.3 C10.4,9.5 2,17.5 0,23.2Z" fill="url(#pg)" stroke="#2a69a6" stroke-width="0.8"/><circle cx="0" cy="0" r="3.6" fill="#fff"/></g>
<g transform="translate(770,186.2)"><path d="M0,23.2 C-2,17.5 -10.4,9.5 -10.4,0.3 C-10.4,-6.5 -5.5,-10.7 0,-10.7 C5.5,-10.7 10.4,-6.5 10.4,0.3 C10.4,9.5 2,17.5 0,23.2Z" fill="url(#pg)" stroke="#2a69a6" stroke-width="0.8"/><circle cx="0" cy="0" r="3.6" fill="#fff"/></g>
<g transform="translate(728,186.6)"><path d="M0,23.2 C-2,17.5 -10.4,9.5 -10.4,0.3 C-10.4,-6.5 -5.5,-10.7 0,-10.7 C5.5,-10.7 10.4,-6.5 10.4,0.3 C10.4,9.5 2,17.5 0,23.2Z" fill="url(#pg)" stroke="#2a69a6" stroke-width="0.8"/><circle cx="0" cy="0" r="3.6" fill="#fff"/></g>
<g transform="translate(720,192)"><path d="M0,23.2 C-2,17.5 -10.4,9.5 -10.4,0.3 C-10.4,-6.5 -5.5,-10.7 0,-10.7 C5.5,-10.7 10.4,-6.5 10.4,0.3 C10.4,9.5 2,17.5 0,23.2Z" fill="url(#pg)" stroke="#2a69a6" stroke-width="0.8"/><circle cx="0" cy="0" r="3.6" fill="#fff"/></g>
<g transform="translate(709.6,199.5)"><path d="M0,23.2 C-2,17.5 -10.4,9.5 -10.4,0.3 C-10.4,-6.5 -5.5,-10.7 0,-10.7 C5.5,-10.7 10.4,-6.5 10.4,0.3 C10.4,9.5 2,17.5 0,23.2Z" fill="url(#pg)" stroke="#2a69a6" stroke-width="0.8"/><circle cx="0" cy="0" r="3.6" fill="#fff"/></g>
<g transform="translate(724.9,199.5)"><path d="M0,23.2 C-2,17.5 -10.4,9.5 -10.4,0.3 C-10.4,-6.5 -5.5,-10.7 0,-10.7 C5.5,-10.7 10.4,-6.5 10.4,0.3 C10.4,9.5 2,17.5 0,23.2Z" fill="url(#pg)" stroke="#2a69a6" stroke-width="0.8"/><circle cx="0" cy="0" r="3.6" fill="#fff"/></g>
<g transform="translate(815.5,200)"><path d="M0,23.2 C-2,17.5 -10.4,9.5 -10.4,0.3 C-10.4,-6.5 -5.5,-10.7 0,-10.7 C5.5,-10.7 10.4,-6.5 10.4,0.3 C10.4,9.5 2,17.5 0,23.2Z" fill="url(#pg)" stroke="#2a69a6" stroke-width="0.8"/><circle cx="0" cy="0" r="3.6" fill="#fff"/></g>
<g transform="translate(790.5,202.4)"><path d="M0,23.2 C-2,17.5 -10.4,9.5 -10.4,0.3 C-10.4,-6.5 -5.5,-10.7 0,-10.7 C5.5,-10.7 10.4,-6.5 10.4,0.3 C10.4,9.5 2,17.5 0,23.2Z" fill="url(#pg)" stroke="#2a69a6" stroke-width="0.8"/><circle cx="0" cy="0" r="3.6" fill="#fff"/></g>
<g transform="translate(778.9,203.2)"><path d="M0,23.2 C-2,17.5 -10.4,9.5 -10.4,0.3 C-10.4,-6.5 -5.5,-10.7 0,-10.7 C5.5,-10.7 10.4,-6.5 10.4,0.3 C10.4,9.5 2,17.5 0,23.2Z" fill="url(#pg)" stroke="#2a69a6" stroke-width="0.8"/><circle cx="0" cy="0" r="3.6" fill="#fff"/></g>
<g transform="translate(841.8,203.2)"><path d="M0,23.2 C-2,17.5 -10.4,9.5 -10.4,0.3 C-10.4,-6.5 -5.5,-10.7 0,-10.7 C5.5,-10.7 10.4,-6.5 10.4,0.3 C10.4,9.5 2,17.5 0,23.2Z" fill="url(#pg)" stroke="#2a69a6" stroke-width="0.8"/><circle cx="0" cy="0" r="3.6" fill="#fff"/></g>
<g transform="translate(754,204)"><path d="M0,23.2 C-2,17.5 -10.4,9.5 -10.4,0.3 C-10.4,-6.5 -5.5,-10.7 0,-10.7 C5.5,-10.7 10.4,-6.5 10.4,0.3 C10.4,9.5 2,17.5 0,23.2Z" fill="url(#pg)" stroke="#2a69a6" stroke-width="0.8"/><circle cx="0" cy="0" r="3.6" fill="#fff"/></g>
<g transform="translate(825.5,205.4)"><path d="M0,23.2 C-2,17.5 -10.4,9.5 -10.4,0.3 C-10.4,-6.5 -5.5,-10.7 0,-10.7 C5.5,-10.7 10.4,-6.5 10.4,0.3 C10.4,9.5 2,17.5 0,23.2Z" fill="url(#pg)" stroke="#2a69a6" stroke-width="0.8"/><circle cx="0" cy="0" r="3.6" fill="#fff"/></g>
<g transform="translate(770,210)"><path d="M0,23.2 C-2,17.5 -10.4,9.5 -10.4,0.3 C-10.4,-6.5 -5.5,-10.7 0,-10.7 C5.5,-10.7 10.4,-6.5 10.4,0.3 C10.4,9.5 2,17.5 0,23.2Z" fill="url(#pg)" stroke="#2a69a6" stroke-width="0.8"/><circle cx="0" cy="0" r="3.6" fill="#fff"/></g>
<g transform="translate(762.6,214.9)"><path d="M0,23.2 C-2,17.5 -10.4,9.5 -10.4,0.3 C-10.4,-6.5 -5.5,-10.7 0,-10.7 C5.5,-10.7 10.4,-6.5 10.4,0.3 C10.4,9.5 2,17.5 0,23.2Z" fill="url(#pg)" stroke="#2a69a6" stroke-width="0.8"/><circle cx="0" cy="0" r="3.6" fill="#fff"/></g>
<g transform="translate(779.6,214.9)"><path d="M0,23.2 C-2,17.5 -10.4,9.5 -10.4,0.3 C-10.4,-6.5 -5.5,-10.7 0,-10.7 C5.5,-10.7 10.4,-6.5 10.4,0.3 C10.4,9.5 2,17.5 0,23.2Z" fill="url(#pg)" stroke="#2a69a6" stroke-width="0.8"/><circle cx="0" cy="0" r="3.6" fill="#fff"/></g>
<g transform="translate(747.3,219)"><path d="M0,23.2 C-2,17.5 -10.4,9.5 -10.4,0.3 C-10.4,-6.5 -5.5,-10.7 0,-10.7 C5.5,-10.7 10.4,-6.5 10.4,0.3 C10.4,9.5 2,17.5 0,23.2Z" fill="url(#pg)" stroke="#2a69a6" stroke-width="0.8"/><circle cx="0" cy="0" r="3.6" fill="#fff"/></g>
<g transform="translate(845.3,231.2)"><path d="M0,23.2 C-2,17.5 -10.4,9.5 -10.4,0.3 C-10.4,-6.5 -5.5,-10.7 0,-10.7 C5.5,-10.7 10.4,-6.5 10.4,0.3 C10.4,9.5 2,17.5 0,23.2Z" fill="url(#pg)" stroke="#2a69a6" stroke-width="0.8"/><circle cx="0" cy="0" r="3.6" fill="#fff"/></g>
<g transform="translate(840.3,262.7)"><path d="M0,23.2 C-2,17.5 -10.4,9.5 -10.4,0.3 C-10.4,-6.5 -5.5,-10.7 0,-10.7 C5.5,-10.7 10.4,-6.5 10.4,0.3 C10.4,9.5 2,17.5 0,23.2Z" fill="url(#pg)" stroke="#2a69a6" stroke-width="0.8"/><circle cx="0" cy="0" r="3.6" fill="#fff"/></g>
<g transform="translate(886.1,315.8)"><path d="M0,23.2 C-2,17.5 -10.4,9.5 -10.4,0.3 C-10.4,-6.5 -5.5,-10.7 0,-10.7 C5.5,-10.7 10.4,-6.5 10.4,0.3 C10.4,9.5 2,17.5 0,23.2Z" fill="url(#pg)" stroke="#2a69a6" stroke-width="0.8"/><circle cx="0" cy="0" r="3.6" fill="#fff"/></g>
</svg>
<div class="a" style="left:525.5px;top:68px;width:28px;height:53px;background:#fff;border:1.6px solid rgba(0,0,0,0.25);border-radius:3px;background-clip:padding-box"></div>
<div class="a" style="left:527px;top:94px;width:25px;height:1px;background:#ccc;"></div>
<div class="a" style="left:534px;top:80.4px;width:11px;height:2.2px;background:#111"></div>
<div class="a" style="left:538.4px;top:76px;width:2.2px;height:11px;background:#111"></div>
<div class="a" style="left:534px;top:106.5px;width:11px;height:2.2px;background:#111"></div>
<div class="a" style="left:514px;top:180px;width:13px;height:15px;background:#f3e3c8;border:1px solid #d9c8a6;border-radius:2px"></div>
<div class="t " style="left:517.00px;top:183.88px;font-size:9px;color:#444;font-family:'Liberation Sans',sans-serif;">0</div>
<div class="a" style="left:775px;top:327.6px;width:218px;height:14.5px;background:rgba(255,255,255,0.85)"></div>
<div class="t " style="left:779.00px;top:330.04px;font-size:9.4px;color:#333;font-family:'Liberation Sans',sans-serif;"><span style="color:#2b7bbf">Leaflet</span> | Map data (c) <span style="color:#2b7bbf">OpenStreetMap</span> contributors</div>
</div></div>
</body></html>
